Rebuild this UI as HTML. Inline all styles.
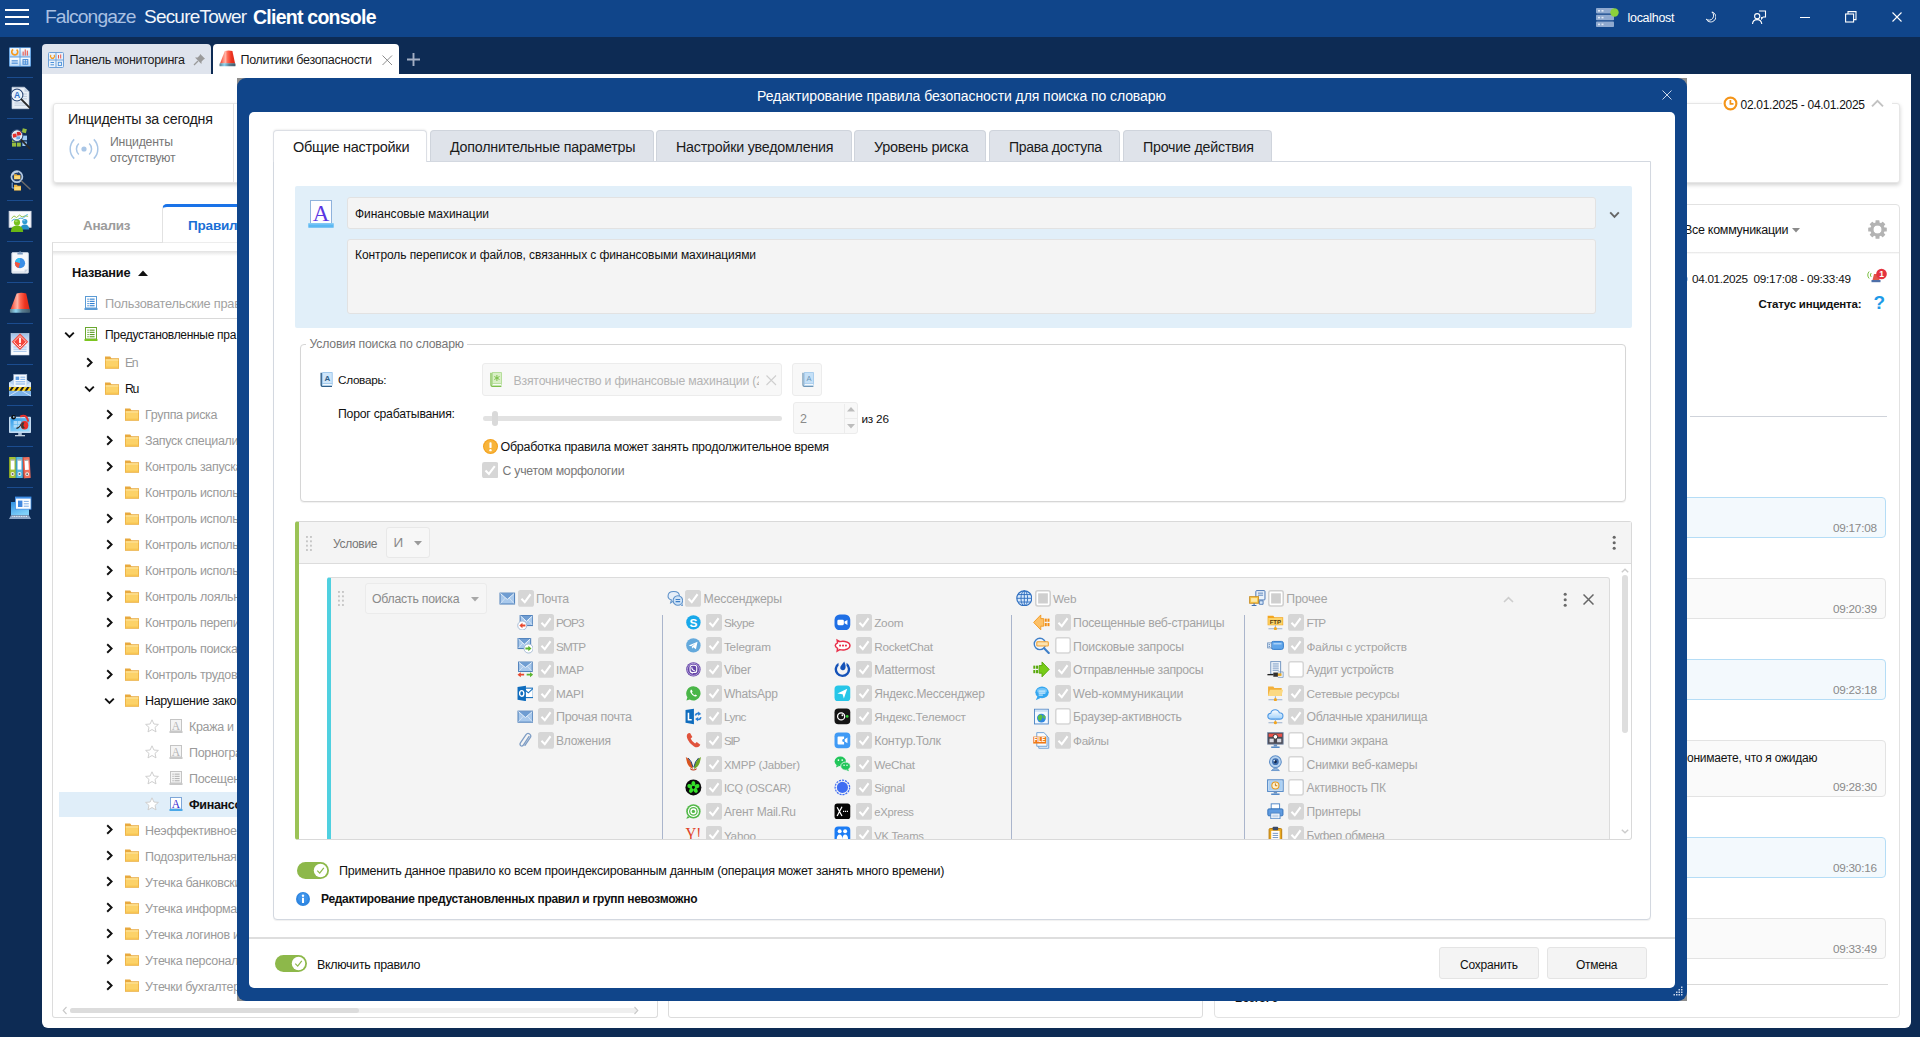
<!DOCTYPE html>
<html lang="ru"><head><meta charset="utf-8"><title>Falcongaze SecureTower Client console</title><style>
html,body{margin:0;padding:0;}
body{width:1920px;height:1037px;position:relative;overflow:hidden;background:#0d2b54;font-family:'Liberation Sans', sans-serif;font-size:12px;}
.b{position:absolute;box-sizing:border-box;display:block;}
.t{position:absolute;white-space:pre;display:block;}
.layer{position:absolute;left:0;top:0;width:1920px;height:1037px;overflow:hidden;}
</style></head>
<body>
<div class="b " style="left:0px;top:0px;width:1920px;height:37px;background:#10458a;"></div>
<div class="b " style="left:5px;top:9px;width:24px;height:2px;background:#fff;"></div>
<div class="b " style="left:5px;top:16px;width:24px;height:2px;background:#fff;"></div>
<div class="b " style="left:5px;top:23px;width:24px;height:2px;background:#fff;"></div>
<span class="t" style="left:45px;top:4.50px;line-height:24px;font-size:19.25px;color:#a9c0e2;letter-spacing:-0.893px;">Falcongaze</span>
<span class="t" style="left:144px;top:4.50px;line-height:24px;font-size:19.0px;color:#f2f6fb;letter-spacing:-0.789px;">SecureTower</span>
<span class="t" style="left:253px;top:4.50px;line-height:24px;font-size:19.5px;color:#fff;font-weight:bold;letter-spacing:-0.752px;">Client console</span>
<svg class="b" style="left:1596px;top:7px;" width="24" height="21" viewBox="0 0 24 21"><rect x="0" y="1" width="18" height="5.4" rx="0.8" fill="#8fa9cf"/><rect x="0" y="7.8" width="18" height="5.4" rx="0.8" fill="#8fa9cf"/><rect x="0" y="14.6" width="18" height="5.4" rx="0.8" fill="#8fa9cf"/><rect x="2" y="3" width="2" height="1.6" fill="#dfe8f5"/><rect x="5.5" y="3" width="2" height="1.6" fill="#dfe8f5"/><rect x="2" y="9.8" width="2" height="1.6" fill="#dfe8f5"/><rect x="5.5" y="9.8" width="2" height="1.6" fill="#dfe8f5"/><rect x="2" y="16.6" width="2" height="1.6" fill="#dfe8f5"/><rect x="5.5" y="16.6" width="2" height="1.6" fill="#dfe8f5"/><circle cx="18.5" cy="5.5" r="4.2" fill="#8bd13a"/></svg>
<span class="t" style="left:1627.5px;top:9.50px;line-height:16px;font-size:12.5px;color:#fff;letter-spacing:-0.292px;">localhost</span>
<svg class="b" style="left:1705.3px;top:11px;" width="11.2" height="11.6" viewBox="0 0 14 14"><path d="M8.6 1 A6.3 6.3 0 1 1 1.6 10 A5.2 5.2 0 1 0 8.6 1 Z" fill="none" stroke="#fff" stroke-width="1.2" stroke-linejoin="round"/></svg>
<svg class="b" style="left:1751px;top:9px;" width="16" height="16" viewBox="0 0 16 16"><circle cx="6.2" cy="7.2" r="2.6" fill="none" stroke="#fff" stroke-width="1.1"/><path d="M1.5 15 Q1.8 10.6 6.2 10.6 Q10.2 10.6 10.8 15" fill="none" stroke="#fff" stroke-width="1.1"/><path d="M8 2 H14.5 V8 H12.2 L10.6 9.8 V8" fill="none" stroke="#fff" stroke-width="1.1"/></svg>
<div class="b " style="left:1800px;top:16.5px;width:10px;height:1.2px;background:#fff;"></div>
<svg class="b" style="left:1845px;top:11px;" width="12" height="12" viewBox="0 0 12 12"><rect x="0.6" y="3" width="8" height="8" fill="none" stroke="#fff" stroke-width="1.1"/><path d="M3 3 V0.6 H11 V8.6 H8.6" fill="none" stroke="#fff" stroke-width="1.1"/></svg>
<svg class="b" style="left:1892px;top:12px;" width="10" height="10" viewBox="0 0 10 10"><path d="M0.5 0.5 L9.5 9.5 M9.5 0.5 L0.5 9.5" stroke="#fff" stroke-width="1.1" fill="none"/></svg>
<svg class="b" style="left:8px;top:45px;" width="24" height="24" viewBox="0 0 24 24"><defs><linearGradient id="dg" x1="0" y1="0" x2="0" y2="1"><stop offset="0" stop-color="#ffffff"/><stop offset="1" stop-color="#bcd9f7"/></linearGradient></defs><rect x="1" y="2.2" width="22" height="19.6" rx="1.2" fill="#5f9fe0"/><rect x="1.9" y="3.1" width="9.6" height="8.4" fill="url(#dg)"/><rect x="12.5" y="3.1" width="9.6" height="8.4" fill="url(#dg)"/><rect x="1.9" y="12.5" width="9.6" height="8.4" fill="url(#dg)"/><rect x="12.5" y="12.5" width="9.6" height="8.4" fill="url(#dg)"/><path d="M8.6 4.6 A3 3 0 1 1 5.2 4.4" fill="none" stroke="#f59a1e" stroke-width="1.7"/><rect x="14.6" y="6.6" width="1.1" height="4" fill="#ee5a4c"/><rect x="16.7" y="4.4" width="1.1" height="6.2" fill="#ee5a4c"/><rect x="18.8" y="5.6" width="1.1" height="5" fill="#ee5a4c"/><rect x="3.6" y="15.3" width="6.2" height="1.1" fill="#3f86d6"/><rect x="3.6" y="17.6" width="6.2" height="1.1" fill="#3f86d6"/><rect x="15" y="14.6" width="4.8" height="4.6" fill="none" stroke="#3f86d6" stroke-width="1"/><path d="M15 16.9 h4.8 M17.4 14.6 v4.6" stroke="#3f86d6" stroke-width="0.8"/></svg>
<div class="b " style="left:7px;top:77px;width:26px;height:1px;background:#1b4c8f;"></div>
<svg class="b" style="left:8px;top:86px;" width="24" height="24" viewBox="0 0 24 24"><path d="M4 1.2 h12.5 l4.5 4.5 v17 H4 Z" fill="#e9eff7" stroke="#c3cfdf" stroke-width="0.7"/><path d="M16.5 1.2 v4.5 h4.5 z" fill="#c6d3e4"/><path d="M6.5 17 h11.5 M6.5 19.2 h11.5 M14 8 h5 M15 10.4 h4 M15 12.8 h4" stroke="#b7c6d9" stroke-width="0.9"/><circle cx="9" cy="9" r="5.8" fill="#e4effb" stroke="#35507c" stroke-width="1.3"/><circle cx="9" cy="9" r="4.8" fill="none" stroke="#fff" stroke-width="0.8"/><text x="9" y="12.2" text-anchor="middle" font-size="8.6" font-weight="bold" font-family="Liberation Sans,sans-serif" fill="#2f6fc8">A</text><path d="M13.4 13.4 L21.6 21.6" stroke="#2a2a2a" stroke-width="1.9" stroke-linecap="round"/></svg>
<div class="b " style="left:7px;top:118px;width:26px;height:1px;background:#1b4c8f;"></div>
<svg class="b" style="left:8px;top:127px;" width="24" height="24" viewBox="0 0 24 24"><rect x="14.2" y="1.6" width="4.2" height="4.2" fill="#96bd3f" transform="rotate(14 16 4)"/><rect x="13.4" y="8.6" width="5.6" height="4.6" fill="#9fcbf5"/><rect x="14.4" y="14.6" width="4.4" height="4.4" fill="#9fcbf5"/><rect x="4" y="15.6" width="4" height="4" fill="#96bd3f"/><rect x="8.8" y="15.6" width="4" height="4" fill="#96bd3f"/><rect x="4" y="11" width="4" height="4" fill="#96bd3f"/><circle cx="9" cy="8.6" r="5.8" fill="#dbe8f6" stroke="#35507c" stroke-width="1.3"/><rect x="4.6" y="6.8" width="4" height="3.6" fill="#e8322e" transform="rotate(-8 6.6 8.6)"/><rect x="9" y="4.8" width="4.2" height="3.6" fill="#d42a2a" transform="rotate(-8 11 6.6)"/><rect x="8.4" y="9.4" width="3.6" height="3" fill="#6aa6e6"/><circle cx="9" cy="8.6" r="4.8" fill="none" stroke="#fff" stroke-width="0.8" opacity="0.8"/><path d="M13.4 13 L21.6 21.4" stroke="#2a2a2a" stroke-width="1.9" stroke-linecap="round"/></svg>
<div class="b " style="left:7px;top:159px;width:26px;height:1px;background:#1b4c8f;"></div>
<svg class="b" style="left:8px;top:168px;" width="24" height="24" viewBox="0 0 24 24"><path d="M4.2 14.6 V20 H6.2" stroke="#8fb6e6" stroke-width="1" fill="none"/><path d="M6 16.8 h2.94 l0.7000000000000001 1.008 H13 V22.4 H6 Z" fill="#e9b142"/><rect x="6.3" y="18.816000000000003" width="6.4" height="3.36" fill="#fbd977"/><circle cx="8.9" cy="8.7" r="5.5" fill="#1f3d6c" stroke="#b4c9e2" stroke-width="1.7"/><path d="M4.6 7.4 A4.6 4.6 0 0 1 10 4.2" stroke="#dfeaf6" stroke-width="1.2" fill="none" opacity="0.8"/><path d="M6 6.2 h2.688 l0.6400000000000001 0.8999999999999999 H12.4 V11.2 H6 Z" fill="#e9b142"/><rect x="6.3" y="8.0" width="5.800000000000001" height="3.0" fill="#fbd977"/><path d="M13.4 13 L22 21" stroke="#6a6a6a" stroke-width="1.5" stroke-linecap="round"/></svg>
<div class="b " style="left:7px;top:200px;width:26px;height:1px;background:#1b4c8f;"></div>
<svg class="b" style="left:8px;top:209px;" width="24" height="24" viewBox="0 0 24 24"><rect x="1.2" y="2.4" width="21.8" height="15.8" fill="#fbfcfe" stroke="#d7dde8" stroke-width="1"/><path d="M3.5 9.5 l2.4 -2.6 l2.6 1.6 l3 -2.4 l2.6 1.8 l3 -1 l3 0.4" stroke="#8fbe3a" stroke-width="0.9" fill="none"/><path d="M3.5 12 l2.6 -1.8 l3 0.6 l3 -1.6 l3 0.2 l3 -3.2 l1.6 -0.8" stroke="#3fa9dc" stroke-width="0.9" fill="none"/><circle cx="16.8" cy="12.6" r="2.6" fill="#2f9cd2"/><path d="M12.4 20.6 q0.2 -5 4.4 -5 q4.2 0 4.4 5 Z" fill="#2590c8"/><circle cx="9" cy="13.4" r="3.1" fill="#78c322"/><path d="M2.8 23 q0.2 -6.4 6.2 -6.4 q6 0 6.2 6.4 Z" fill="#6ab814"/><ellipse cx="8.2" cy="12.2" rx="1.5" ry="1" fill="#b5e27a" opacity="0.7"/><ellipse cx="16.2" cy="11.6" rx="1.2" ry="0.8" fill="#8fd0f2" opacity="0.7"/></svg>
<div class="b " style="left:7px;top:241px;width:26px;height:1px;background:#1b4c8f;"></div>
<svg class="b" style="left:8px;top:250px;" width="24" height="24" viewBox="0 0 24 24"><rect x="3.8" y="2.6" width="16.6" height="20.6" rx="0.8" fill="#f6f8fb" stroke="#c3cedd" stroke-width="0.9"/><rect x="4.6" y="21.2" width="15" height="1.4" fill="#dfe6ef"/><path d="M9.4 4.4 V2.4 H11 Q12.1 0.2 13.2 2.4 H14.8 V4.4 Z" fill="#7f9cc0"/><circle cx="12" cy="13.2" r="5.1" fill="#3a8ee6"/><path d="M12 13.2 L12 8.1 A5.1 5.1 0 0 0 7.1 11.8 Z" fill="#33c0f2"/><path d="M12 13.2 L7.1 11.8 A5.1 5.1 0 0 0 10.6 18.1 Z" fill="#f4553c"/><path d="M16.6 23 l3.6 -3.6 h-3.6 z" fill="#c9d4e3"/></svg>
<div class="b " style="left:7px;top:282px;width:26px;height:1px;background:#1b4c8f;"></div>
<svg class="b" style="left:8px;top:291px;" width="24" height="24" viewBox="0 0 24 24"><defs><linearGradient id="sg" x1="0" x2="1"><stop offset="0" stop-color="#ee3a26"/><stop offset="0.22" stop-color="#ff8a78"/><stop offset="0.36" stop-color="#ffb3a6"/><stop offset="0.5" stop-color="#ff6a55"/><stop offset="0.75" stop-color="#ee3420"/><stop offset="1" stop-color="#d92a18"/></linearGradient><linearGradient id="sb" x1="0" x2="1"><stop offset="0" stop-color="#5c7d8c"/><stop offset="0.3" stop-color="#8fd6f2"/><stop offset="0.6" stop-color="#5a7f93"/><stop offset="1" stop-color="#3f5a6c"/></linearGradient></defs><path d="M8.6 2.4 Q13.4 1.2 18.2 2.4 L21.6 18.2 H2.6 Z" fill="url(#sg)"/><rect x="1.9" y="18" width="20.2" height="3.8" rx="0.8" fill="url(#sb)"/></svg>
<div class="b " style="left:7px;top:323px;width:26px;height:1px;background:#1b4c8f;"></div>
<svg class="b" style="left:8px;top:332px;" width="24" height="24" viewBox="0 0 24 24"><defs><linearGradient id="ad" x1="0" y1="0" x2="0" y2="1"><stop offset="0" stop-color="#9ebfe6"/><stop offset="0.55" stop-color="#e4eefa"/><stop offset="1" stop-color="#ffffff"/></linearGradient></defs><rect x="3" y="1.4" width="18" height="21.6" fill="url(#ad)" stroke="#c9d8ea" stroke-width="0.6"/><path d="M5.4 15 h13.2 M5.4 17.2 h13.2 M5.4 19.4 h13.2" stroke="#9cc0e8" stroke-width="0.9"/><path d="M12 1.6 L20.2 9.8 L12 18 L3.8 9.8 Z" fill="#f4473c"/><path d="M12 3.6 L18.2 9.8 L12 16 L5.8 9.8 Z" fill="none" stroke="#ffd9d4" stroke-width="0.9"/><rect x="11.1" y="5.6" width="1.8" height="5.4" rx="0.5" fill="#fff"/><rect x="11.1" y="12" width="1.8" height="1.9" rx="0.5" fill="#fff"/></svg>
<div class="b " style="left:7px;top:364px;width:26px;height:1px;background:#1b4c8f;"></div>
<svg class="b" style="left:8px;top:373px;" width="24" height="24" viewBox="0 0 24 24"><path d="M1 9.6 L12 2.6 L23 9.6 V23 H1 Z" fill="#b9d4f2"/><rect x="5.8" y="1.6" width="13" height="13" fill="#f7fafd" stroke="#bcd0e8" stroke-width="0.6"/><rect x="7.6" y="3.6" width="3.6" height="3.4" fill="#5b9be0"/><path d="M12.4 4.2 h4.8 M12.4 6.4 h4.8 M7.6 8.8 h9.6 M7.6 11 h9.6" stroke="#6ea6e6" stroke-width="0.9"/><path d="M1 9.6 L9 14 H15 L23 9.6 V23 H1 Z" fill="#d6e7f9"/><rect x="1" y="17.8" width="22" height="5.2" fill="#7db3ea"/><path d="M1 23 L10 17.8 M23 23 L14 17.8" stroke="#d6e8fa" stroke-width="0.9"/><rect x="1" y="14" width="22" height="3.8" fill="#f9cf1c"/><path d="M1 17.8 l2.6 -3.8 h2.4 l-2.6 3.8 z M6.2 17.8 l2.6 -3.8 h2.4 l-2.6 3.8 z M11.4 17.8 l2.6 -3.8 h2.4 l-2.6 3.8 z M16.6 17.8 l2.6 -3.8 h2.4 l-2.6 3.8 z M21.8 17.8 l1.2 -1.8 v1.8 z" fill="#1a1a1a"/></svg>
<div class="b " style="left:7px;top:405px;width:26px;height:1px;background:#1b4c8f;"></div>
<svg class="b" style="left:8px;top:414px;" width="24" height="24" viewBox="0 0 24 24"><defs><linearGradient id="mg" x1="0" y1="0" x2="0.6" y2="1"><stop offset="0" stop-color="#2f98e6"/><stop offset="1" stop-color="#8fd6fb"/></linearGradient></defs><rect x="1" y="2.8" width="22" height="16.2" rx="0.8" fill="#c3daf0"/><rect x="2.4" y="4.2" width="19.2" height="13.2" fill="url(#mg)"/><rect x="5.6" y="7" width="3.4" height="3" fill="#bfe4fb" opacity="0.8"/><rect x="9.6" y="7" width="3.4" height="3" fill="#bfe4fb" opacity="0.8"/><rect x="5.6" y="10.6" width="3.4" height="3" fill="#bfe4fb" opacity="0.8"/><rect x="9.6" y="10.6" width="3.4" height="3" fill="#bfe4fb" opacity="0.8"/><rect x="10.2" y="19" width="3.6" height="2.2" fill="#a9bdd4"/><rect x="7" y="21" width="10" height="1.3" fill="#c3d0df"/><path d="M12.2 2.6 Q18.6 -0.8 20.2 7.6" fill="none" stroke="#ea2f2a" stroke-width="1.9"/><path d="M13.6 9.2 Q11.6 13.8 8.4 14.4" fill="none" stroke="#2a2a2a" stroke-width="1.1"/><ellipse cx="16.6" cy="11.2" rx="3.7" ry="4.3" fill="#ea2f2a"/><ellipse cx="15.2" cy="11.4" rx="2" ry="3.2" fill="#3a3a3a"/><ellipse cx="17.4" cy="11.2" rx="1.9" ry="2.7" fill="#ea2f2a"/><circle cx="5.5" cy="3.2" r="2.3" fill="#0c0c0c"/><circle cx="5.8" cy="2.9" r="0.9" fill="#8fc4f0"/></svg>
<div class="b " style="left:7px;top:446px;width:26px;height:1px;background:#1b4c8f;"></div>
<svg class="b" style="left:8px;top:455px;" width="24" height="24" viewBox="0 0 24 24"><g transform="rotate(0 7.9 23)"><rect x="1" y="2" width="6.9" height="21" rx="0.5" fill="#a3c035"/><rect x="1" y="2" width="1" height="21" fill="#8aa525"/><rect x="2.7" y="4.6" width="3.8" height="10" fill="#fff"/><rect x="2.7" y="4.6" width="3.8" height="0.9" fill="#8a8a8a"/><circle cx="4.6" cy="19" r="1.9" fill="#f4f4f4"/><circle cx="4.6" cy="19" r="1" fill="#6a6a6a"/></g><g transform="rotate(0 14.8 23)"><rect x="7.9" y="2" width="6.9" height="21" rx="0.5" fill="#55b6e0"/><rect x="7.9" y="2" width="1" height="21" fill="#3a9cc8"/><rect x="9.6" y="4.6" width="3.8" height="10" fill="#fff"/><rect x="9.6" y="4.6" width="3.8" height="0.9" fill="#8a8a8a"/><circle cx="11.5" cy="19" r="1.9" fill="#f4f4f4"/><circle cx="11.5" cy="19" r="1" fill="#6a6a6a"/></g><g transform="rotate(-3 22.700000000000003 23)"><rect x="15.8" y="2" width="6.9" height="21" rx="0.5" fill="#f0705c"/><rect x="15.8" y="2" width="1" height="21" fill="#d8503c"/><rect x="17.5" y="4.6" width="3.8" height="10" fill="#fff"/><rect x="17.5" y="4.6" width="3.8" height="0.9" fill="#8a8a8a"/><circle cx="19.400000000000002" cy="19" r="1.9" fill="#f4f4f4"/><circle cx="19.400000000000002" cy="19" r="1" fill="#6a6a6a"/></g></svg>
<div class="b " style="left:7px;top:487px;width:26px;height:1px;background:#1b4c8f;"></div>
<svg class="b" style="left:8px;top:496px;" width="24" height="24" viewBox="0 0 24 24"><defs><linearGradient id="lg" x1="0" y1="0" x2="0.5" y2="1"><stop offset="0" stop-color="#2f90e2"/><stop offset="1" stop-color="#7fd0fa"/></linearGradient></defs><rect x="3" y="6" width="18" height="13.2" fill="url(#lg)"/><path d="M3 19.2 L1 23 H23 L21 19.2 Z" fill="#8ea6c6"/><path d="M4.4 20.4 h15.2" stroke="#eef3f9" stroke-width="1" stroke-dasharray="1 0.7"/><rect x="7.4" y="1" width="15.6" height="12.2" fill="#fbfdff" stroke="#3f8ee6" stroke-width="0.8"/><rect x="7.4" y="1" width="15.6" height="1.6" fill="#3f8ee6"/><rect x="10" y="4.6" width="4.4" height="6.4" fill="#3f86de"/><path d="M15.8 5.4 h5 M15.8 7.8 h5 M15.8 10.2 h5" stroke="#6fa4e2" stroke-width="0.9"/></svg>
<div class="b " style="left:42px;top:44px;width:169px;height:30px;background:#dfe4ed;border-radius:4px 4px 0 0;"></div>
<div class="b " style="left:213px;top:44px;width:185.7px;height:30px;background:#fff;border-radius:4px 4px 0 0;"></div>
<svg class="b" style="left:48px;top:52px;" width="16" height="16" viewBox="0 0 16 16"><rect x="0.5" y="0.5" width="15" height="15" rx="1" fill="#eaf2fb" stroke="#6fa1d8" stroke-width="1"/><path d="M8 0.5 V15.5 M0.5 8 H15.5" stroke="#6fa1d8" stroke-width="1"/><path d="M6 3 A2 2 0 1 1 3 3" fill="none" stroke="#f39a1e" stroke-width="1.2"/><path d="M10.5 3 v3.5 M12.7 2.5 v4" stroke="#e8574a" stroke-width="1"/><path d="M2.5 10.5 h3.5 M2.5 12.8 h3.5" stroke="#4a90d9" stroke-width="1"/><rect x="10.3" y="10.3" width="3.2" height="3.2" fill="none" stroke="#4a90d9" stroke-width="0.9"/></svg>
<span class="t" style="left:69.5px;top:52.00px;line-height:16px;font-size:12.5px;color:#1a1a1a;letter-spacing:-0.306px;">Панель мониторинга</span>
<svg class="b" style="left:193px;top:53px;" width="13" height="13" viewBox="0 0 13 13"><path d="M7.2 1 L12 5.8 L10.6 6.4 L8.6 8.4 L8.4 11 L2 4.6 L4.6 4.4 L6.6 2.4 Z" fill="#9a9a9a"/><path d="M5 8 L1 12" stroke="#9a9a9a" stroke-width="1.2"/></svg>
<svg class="b" style="left:217.6px;top:49.4px;" width="19" height="19" viewBox="0 0 24 24"><defs><linearGradient id="sg" x1="0" x2="1"><stop offset="0" stop-color="#ee3a26"/><stop offset="0.22" stop-color="#ff8a78"/><stop offset="0.36" stop-color="#ffb3a6"/><stop offset="0.5" stop-color="#ff6a55"/><stop offset="0.75" stop-color="#ee3420"/><stop offset="1" stop-color="#d92a18"/></linearGradient><linearGradient id="sb" x1="0" x2="1"><stop offset="0" stop-color="#5c7d8c"/><stop offset="0.3" stop-color="#8fd6f2"/><stop offset="0.6" stop-color="#5a7f93"/><stop offset="1" stop-color="#3f5a6c"/></linearGradient></defs><path d="M8.6 2.4 Q13.4 1.2 18.2 2.4 L21.6 18.2 H2.6 Z" fill="url(#sg)"/><rect x="1.9" y="18" width="20.2" height="3.8" rx="0.8" fill="url(#sb)"/></svg>
<span class="t" style="left:240.5px;top:52.00px;line-height:16px;font-size:12.5px;color:#1a1a1a;letter-spacing:-0.305px;">Политики безопасности</span>
<svg class="b" style="left:382px;top:54.5px;" width="10.5" height="10.5" viewBox="0 0 10.5 10.5"><path d="M0.5 0.5 L10.0 10.0 M10.0 0.5 L0.5 10.0" stroke="#8c8c8c" stroke-width="1.0" fill="none"/></svg>
<svg class="b" style="left:406.5px;top:52.5px;" width="13" height="13" viewBox="0 0 13 13"><path d="M6.5 0 V13 M0 6.5 H13" stroke="#a3afc4" stroke-width="1.9"/></svg>
<div class="b " style="left:42px;top:73.5px;width:1869px;height:954.5px;background:#fff;border-radius:0 0 6px 6px;"></div>
<div class="b " style="left:53px;top:103px;width:1847px;height:79.7px;background:#fff;border:1px solid #e6e6e6;border-radius:3px;box-shadow:0 2px 4px rgba(0,0,0,0.18);"></div>
<div class="b " style="left:233px;top:103px;width:1px;height:79px;background:#e3e3e3;"></div>
<span class="t" style="left:68px;top:109.00px;line-height:20px;font-size:14.25px;color:#1a1a1a;letter-spacing:-0.207px;">Инциденты за сегодня</span>
<svg class="b" style="left:68px;top:136px;" width="32" height="26" viewBox="0 0 32 26"><circle cx="16" cy="13" r="2.6" fill="#a9c6e6"/><path d="M10.8 7.5 A7.6 7.6 0 0 0 10.8 18.5 M21.2 7.5 A7.6 7.6 0 0 1 21.2 18.5" fill="none" stroke="#a9c6e6" stroke-width="1.5"/><path d="M6.2 3.4 A13.5 13.5 0 0 0 6.2 22.6 M25.8 3.4 A13.5 13.5 0 0 1 25.8 22.6" fill="none" stroke="#a9c6e6" stroke-width="1.5"/></svg>
<span class="t" style="left:110px;top:134.00px;line-height:16px;font-size:12.25px;color:#777;letter-spacing:-0.197px;">Инциденты</span>
<span class="t" style="left:110px;top:150.00px;line-height:16px;font-size:12.25px;color:#777;letter-spacing:-0.287px;">отсутствуют</span>
<div class="b " style="left:1722px;top:98px;width:170px;height:12px;background:#fff;"></div>
<svg class="b" style="left:1723px;top:96px;" width="15" height="15" viewBox="0 0 15 15"><circle cx="7.5" cy="7.5" r="5.9" fill="#fff" stroke="#f4951a" stroke-width="2.1"/><path d="M7.4 3.9 V7.9 H10.5" fill="none" stroke="#f4951a" stroke-width="1.7"/></svg>
<span class="t" style="left:1740.5px;top:97.00px;line-height:16px;font-size:12px;color:#111;letter-spacing:-0.286px;">02.01.2025 - 04.01.2025</span>
<svg class="b" style="left:1871px;top:99px;" width="13" height="8.5" viewBox="0 0 13 8.5"><path d="M1 7.4 L6.5 1.8 L12 7.4" fill="none" stroke="#c2c2c2" stroke-width="1.9"/></svg>
<span class="t" style="left:83px;top:216.00px;line-height:20px;font-size:13.5px;color:#9c9c9c;font-weight:bold;letter-spacing:-0.302px;">Анализ</span>
<div class="b " style="left:162px;top:203.7px;width:200px;height:39.3px;background:#fff;border:1px solid #e2e2e2;border-radius:5px 5px 0 0;border-bottom:none;border-top:3.4px solid #1a73e8;"></div>
<span class="t" style="left:188px;top:216.00px;line-height:20px;font-size:13.5px;color:#1a6fd6;font-weight:bold;letter-spacing:-0.191px;">Правила</span>
<div class="b " style="left:52px;top:242px;width:606px;height:776px;background:#fff;border:1px solid #dcdcdc;border-radius:0 0 3px 3px;border-top:1px solid #e2e2e2;"></div>
<div class="b " style="left:163px;top:242px;width:198px;height:1px;background:#ededed;"></div>
<div class="b " style="left:53px;top:251px;width:604px;height:5px;background:linear-gradient(#e2e2e2,#fff);"></div>
<span class="t" style="left:72px;top:263.00px;line-height:20px;font-size:12.75px;color:#111;font-weight:bold;letter-spacing:-0.242px;">Название</span>
<svg class="b" style="left:137.7px;top:270.3px;" width="10" height="7" viewBox="0 0 10 7"><path d="M0 6 L5 0.5 L10 6 Z" fill="#111"/></svg>
<span class="t" style="left:145px;top:-58.00px;line-height:16px;font-size:12.5px;color:#000;letter-spacing:-0.316px;">Группа риска</span>
<svg class="b" style="left:84px;top:296px;" width="14" height="15" viewBox="0 0 14 15"><rect x="1.5" y="0.5" width="11" height="11.5" fill="#fff" stroke="#5b9bd5" stroke-width="1"/><rect x="0.5" y="12" width="13" height="2" fill="#5b9bd5"/><rect x="3.4" y="2.6" width="1.3" height="1.1" fill="#2f7fd0"/><rect x="5.6" y="2.6" width="5" height="1.1" fill="#2f7fd0"/><rect x="3.4" y="4.800000000000001" width="1.3" height="1.1" fill="#2f7fd0"/><rect x="5.6" y="4.800000000000001" width="5" height="1.1" fill="#2f7fd0"/><rect x="3.4" y="7.0" width="1.3" height="1.1" fill="#2f7fd0"/><rect x="5.6" y="7.0" width="5" height="1.1" fill="#2f7fd0"/><rect x="3.4" y="9.200000000000001" width="1.3" height="1.1" fill="#2f7fd0"/><rect x="5.6" y="9.200000000000001" width="5" height="1.1" fill="#2f7fd0"/></svg>
<span class="t" style="left:105px;top:296.30px;line-height:16px;font-size:12.75px;color:#a2a2a2;letter-spacing:-0.216px;">Пользовательские правила</span>
<div class="b " style="left:59px;top:318px;width:590px;height:1px;background:#d9d9d9;"></div>
<svg class="b" style="left:63.5px;top:330px;" width="11" height="11" viewBox="0 0 11 11"><path d="M1.2 2.6 L5.5 6.9 L9.8 2.6" fill="none" stroke="#111" stroke-width="1.9"/></svg>
<svg class="b" style="left:84px;top:327px;" width="14" height="15" viewBox="0 0 14 15"><rect x="1.5" y="0.5" width="11" height="11.5" fill="#fff" stroke="#6aa82f" stroke-width="1"/><rect x="0.5" y="12" width="13" height="2" fill="#7cc520"/><rect x="3.4" y="2.6" width="1.3" height="1.1" fill="#5a9a25"/><rect x="5.6" y="2.6" width="5" height="1.1" fill="#5a9a25"/><rect x="3.4" y="4.800000000000001" width="1.3" height="1.1" fill="#5a9a25"/><rect x="5.6" y="4.800000000000001" width="5" height="1.1" fill="#5a9a25"/><rect x="3.4" y="7.0" width="1.3" height="1.1" fill="#5a9a25"/><rect x="5.6" y="7.0" width="5" height="1.1" fill="#5a9a25"/><rect x="3.4" y="9.200000000000001" width="1.3" height="1.1" fill="#5a9a25"/><rect x="5.6" y="9.200000000000001" width="5" height="1.1" fill="#5a9a25"/></svg>
<span class="t" style="left:105px;top:327.30px;line-height:16px;font-size:12.0px;color:#111;letter-spacing:-0.306px;">Предустановленные пра</span>
<svg class="b" style="left:85px;top:356.5px;" width="11" height="11" viewBox="0 0 11 11"><path d="M2.2 1.2 L6.6 5.5 L2.2 9.8" fill="none" stroke="#111" stroke-width="1.9"/></svg>
<svg class="b" style="left:104px;top:353.5px;" width="16" height="16" viewBox="0 0 16 16"><path d="M1 2.6 h5.2 l1.2 1.7 H15 V14.8 H1 Z" fill="#e8a93e"/><rect x="1.7" y="5.3" width="12.6" height="8.8" fill="#fcd268"/><rect x="1.7" y="5.3" width="12.6" height="1.3" fill="#fee39a"/><rect x="1.7" y="12.6" width="12.6" height="1.5" fill="#f8c552"/></svg>
<span class="t" style="left:125px;top:355.00px;line-height:16px;font-size:12.25px;color:#9a9a9a;letter-spacing:-1.300px;">En</span>
<svg class="b" style="left:83.5px;top:383.5px;" width="11" height="11" viewBox="0 0 11 11"><path d="M1.2 2.6 L5.5 6.9 L9.8 2.6" fill="none" stroke="#111" stroke-width="1.9"/></svg>
<svg class="b" style="left:104px;top:379.5px;" width="16" height="16" viewBox="0 0 16 16"><path d="M1 2.6 h5.2 l1.2 1.7 H15 V14.8 H1 Z" fill="#e8a93e"/><rect x="1.7" y="5.3" width="12.6" height="8.8" fill="#fcd268"/><rect x="1.7" y="5.3" width="12.6" height="1.3" fill="#fee39a"/><rect x="1.7" y="12.6" width="12.6" height="1.5" fill="#f8c552"/></svg>
<span class="t" style="left:125px;top:381.00px;line-height:16px;font-size:12.25px;color:#111;letter-spacing:-1.300px;">Ru</span>
<svg class="b" style="left:105px;top:408.5px;" width="11" height="11" viewBox="0 0 11 11"><path d="M2.2 1.2 L6.6 5.5 L2.2 9.8" fill="none" stroke="#111" stroke-width="1.9"/></svg>
<svg class="b" style="left:124px;top:405.5px;" width="16" height="16" viewBox="0 0 16 16"><path d="M1 2.6 h5.2 l1.2 1.7 H15 V14.8 H1 Z" fill="#e8a93e"/><rect x="1.7" y="5.3" width="12.6" height="8.8" fill="#fcd268"/><rect x="1.7" y="5.3" width="12.6" height="1.3" fill="#fee39a"/><rect x="1.7" y="12.6" width="12.6" height="1.5" fill="#f8c552"/></svg>
<span class="t" style="left:145px;top:407.00px;line-height:16px;font-size:12.5px;color:#9a9a9a;letter-spacing:-0.316px;">Группа риска</span>
<svg class="b" style="left:105px;top:434.5px;" width="11" height="11" viewBox="0 0 11 11"><path d="M2.2 1.2 L6.6 5.5 L2.2 9.8" fill="none" stroke="#111" stroke-width="1.9"/></svg>
<svg class="b" style="left:124px;top:431.5px;" width="16" height="16" viewBox="0 0 16 16"><path d="M1 2.6 h5.2 l1.2 1.7 H15 V14.8 H1 Z" fill="#e8a93e"/><rect x="1.7" y="5.3" width="12.6" height="8.8" fill="#fcd268"/><rect x="1.7" y="5.3" width="12.6" height="1.3" fill="#fee39a"/><rect x="1.7" y="12.6" width="12.6" height="1.5" fill="#f8c552"/></svg>
<span class="t" style="left:145px;top:433.00px;line-height:16px;font-size:12.5px;color:#9a9a9a;letter-spacing:-0.316px;">Запуск специализированного ПО</span>
<svg class="b" style="left:105px;top:460.5px;" width="11" height="11" viewBox="0 0 11 11"><path d="M2.2 1.2 L6.6 5.5 L2.2 9.8" fill="none" stroke="#111" stroke-width="1.9"/></svg>
<svg class="b" style="left:124px;top:457.5px;" width="16" height="16" viewBox="0 0 16 16"><path d="M1 2.6 h5.2 l1.2 1.7 H15 V14.8 H1 Z" fill="#e8a93e"/><rect x="1.7" y="5.3" width="12.6" height="8.8" fill="#fcd268"/><rect x="1.7" y="5.3" width="12.6" height="1.3" fill="#fee39a"/><rect x="1.7" y="12.6" width="12.6" height="1.5" fill="#f8c552"/></svg>
<span class="t" style="left:145px;top:459.00px;line-height:16px;font-size:12.5px;color:#9a9a9a;letter-spacing:-0.316px;">Контроль запуска приложений</span>
<svg class="b" style="left:105px;top:486.5px;" width="11" height="11" viewBox="0 0 11 11"><path d="M2.2 1.2 L6.6 5.5 L2.2 9.8" fill="none" stroke="#111" stroke-width="1.9"/></svg>
<svg class="b" style="left:124px;top:483.5px;" width="16" height="16" viewBox="0 0 16 16"><path d="M1 2.6 h5.2 l1.2 1.7 H15 V14.8 H1 Z" fill="#e8a93e"/><rect x="1.7" y="5.3" width="12.6" height="8.8" fill="#fcd268"/><rect x="1.7" y="5.3" width="12.6" height="1.3" fill="#fee39a"/><rect x="1.7" y="12.6" width="12.6" height="1.5" fill="#f8c552"/></svg>
<span class="t" style="left:145px;top:485.00px;line-height:16px;font-size:12.5px;color:#9a9a9a;letter-spacing:-0.316px;">Контроль использования</span>
<svg class="b" style="left:105px;top:512.5px;" width="11" height="11" viewBox="0 0 11 11"><path d="M2.2 1.2 L6.6 5.5 L2.2 9.8" fill="none" stroke="#111" stroke-width="1.9"/></svg>
<svg class="b" style="left:124px;top:509.5px;" width="16" height="16" viewBox="0 0 16 16"><path d="M1 2.6 h5.2 l1.2 1.7 H15 V14.8 H1 Z" fill="#e8a93e"/><rect x="1.7" y="5.3" width="12.6" height="8.8" fill="#fcd268"/><rect x="1.7" y="5.3" width="12.6" height="1.3" fill="#fee39a"/><rect x="1.7" y="12.6" width="12.6" height="1.5" fill="#f8c552"/></svg>
<span class="t" style="left:145px;top:511.00px;line-height:16px;font-size:12.5px;color:#9a9a9a;letter-spacing:-0.316px;">Контроль использования</span>
<svg class="b" style="left:105px;top:538.5px;" width="11" height="11" viewBox="0 0 11 11"><path d="M2.2 1.2 L6.6 5.5 L2.2 9.8" fill="none" stroke="#111" stroke-width="1.9"/></svg>
<svg class="b" style="left:124px;top:535.5px;" width="16" height="16" viewBox="0 0 16 16"><path d="M1 2.6 h5.2 l1.2 1.7 H15 V14.8 H1 Z" fill="#e8a93e"/><rect x="1.7" y="5.3" width="12.6" height="8.8" fill="#fcd268"/><rect x="1.7" y="5.3" width="12.6" height="1.3" fill="#fee39a"/><rect x="1.7" y="12.6" width="12.6" height="1.5" fill="#f8c552"/></svg>
<span class="t" style="left:145px;top:537.00px;line-height:16px;font-size:12.5px;color:#9a9a9a;letter-spacing:-0.316px;">Контроль использования</span>
<svg class="b" style="left:105px;top:564.5px;" width="11" height="11" viewBox="0 0 11 11"><path d="M2.2 1.2 L6.6 5.5 L2.2 9.8" fill="none" stroke="#111" stroke-width="1.9"/></svg>
<svg class="b" style="left:124px;top:561.5px;" width="16" height="16" viewBox="0 0 16 16"><path d="M1 2.6 h5.2 l1.2 1.7 H15 V14.8 H1 Z" fill="#e8a93e"/><rect x="1.7" y="5.3" width="12.6" height="8.8" fill="#fcd268"/><rect x="1.7" y="5.3" width="12.6" height="1.3" fill="#fee39a"/><rect x="1.7" y="12.6" width="12.6" height="1.5" fill="#f8c552"/></svg>
<span class="t" style="left:145px;top:563.00px;line-height:16px;font-size:12.5px;color:#9a9a9a;letter-spacing:-0.316px;">Контроль использования</span>
<svg class="b" style="left:105px;top:590.5px;" width="11" height="11" viewBox="0 0 11 11"><path d="M2.2 1.2 L6.6 5.5 L2.2 9.8" fill="none" stroke="#111" stroke-width="1.9"/></svg>
<svg class="b" style="left:124px;top:587.5px;" width="16" height="16" viewBox="0 0 16 16"><path d="M1 2.6 h5.2 l1.2 1.7 H15 V14.8 H1 Z" fill="#e8a93e"/><rect x="1.7" y="5.3" width="12.6" height="8.8" fill="#fcd268"/><rect x="1.7" y="5.3" width="12.6" height="1.3" fill="#fee39a"/><rect x="1.7" y="12.6" width="12.6" height="1.5" fill="#f8c552"/></svg>
<span class="t" style="left:145px;top:589.00px;line-height:16px;font-size:12.5px;color:#9a9a9a;letter-spacing:-0.316px;">Контроль лояльности</span>
<svg class="b" style="left:105px;top:616.5px;" width="11" height="11" viewBox="0 0 11 11"><path d="M2.2 1.2 L6.6 5.5 L2.2 9.8" fill="none" stroke="#111" stroke-width="1.9"/></svg>
<svg class="b" style="left:124px;top:613.5px;" width="16" height="16" viewBox="0 0 16 16"><path d="M1 2.6 h5.2 l1.2 1.7 H15 V14.8 H1 Z" fill="#e8a93e"/><rect x="1.7" y="5.3" width="12.6" height="8.8" fill="#fcd268"/><rect x="1.7" y="5.3" width="12.6" height="1.3" fill="#fee39a"/><rect x="1.7" y="12.6" width="12.6" height="1.5" fill="#f8c552"/></svg>
<span class="t" style="left:145px;top:615.00px;line-height:16px;font-size:12.5px;color:#9a9a9a;letter-spacing:-0.316px;">Контроль переписки</span>
<svg class="b" style="left:105px;top:642.5px;" width="11" height="11" viewBox="0 0 11 11"><path d="M2.2 1.2 L6.6 5.5 L2.2 9.8" fill="none" stroke="#111" stroke-width="1.9"/></svg>
<svg class="b" style="left:124px;top:639.5px;" width="16" height="16" viewBox="0 0 16 16"><path d="M1 2.6 h5.2 l1.2 1.7 H15 V14.8 H1 Z" fill="#e8a93e"/><rect x="1.7" y="5.3" width="12.6" height="8.8" fill="#fcd268"/><rect x="1.7" y="5.3" width="12.6" height="1.3" fill="#fee39a"/><rect x="1.7" y="12.6" width="12.6" height="1.5" fill="#f8c552"/></svg>
<span class="t" style="left:145px;top:641.00px;line-height:16px;font-size:12.5px;color:#9a9a9a;letter-spacing:-0.316px;">Контроль поиска работы</span>
<svg class="b" style="left:105px;top:668.5px;" width="11" height="11" viewBox="0 0 11 11"><path d="M2.2 1.2 L6.6 5.5 L2.2 9.8" fill="none" stroke="#111" stroke-width="1.9"/></svg>
<svg class="b" style="left:124px;top:665.5px;" width="16" height="16" viewBox="0 0 16 16"><path d="M1 2.6 h5.2 l1.2 1.7 H15 V14.8 H1 Z" fill="#e8a93e"/><rect x="1.7" y="5.3" width="12.6" height="8.8" fill="#fcd268"/><rect x="1.7" y="5.3" width="12.6" height="1.3" fill="#fee39a"/><rect x="1.7" y="12.6" width="12.6" height="1.5" fill="#f8c552"/></svg>
<span class="t" style="left:145px;top:667.00px;line-height:16px;font-size:12.5px;color:#9a9a9a;letter-spacing:-0.316px;">Контроль трудовой дисциплины</span>
<svg class="b" style="left:103.5px;top:695.5px;" width="11" height="11" viewBox="0 0 11 11"><path d="M1.2 2.6 L5.5 6.9 L9.8 2.6" fill="none" stroke="#111" stroke-width="1.9"/></svg>
<svg class="b" style="left:124px;top:691.5px;" width="16" height="16" viewBox="0 0 16 16"><path d="M1 2.6 h5.2 l1.2 1.7 H15 V14.8 H1 Z" fill="#e8a93e"/><rect x="1.7" y="5.3" width="12.6" height="8.8" fill="#fcd268"/><rect x="1.7" y="5.3" width="12.6" height="1.3" fill="#fee39a"/><rect x="1.7" y="12.6" width="12.6" height="1.5" fill="#f8c552"/></svg>
<span class="t" style="left:145px;top:693.00px;line-height:16px;font-size:12.5px;color:#111;letter-spacing:-0.316px;">Нарушение законодательства</span>
<div class="b " style="left:59px;top:791.5px;width:590px;height:25.5px;background:#e0eef9;"></div>
<svg class="b" style="left:144.5px;top:718.5px;" width="14" height="14" viewBox="0 0 14 14"><path d="M7 0.8 L8.9 5 L13.4 5.4 L10 8.4 L11 12.9 L7 10.5 L3 12.9 L4 8.4 L0.6 5.4 L5.1 5 Z" fill="#fff" stroke="#cfcfcf" stroke-width="1" stroke-linejoin="round"/></svg>
<svg class="b" style="left:169px;top:718.5px;" width="14" height="15" viewBox="0 0 14 15"><rect x="1.5" y="0.5" width="11" height="11.5" fill="#f4f4f4" stroke="#c4c4c4" stroke-width="1"/><rect x="0.5" y="12" width="13" height="2" fill="#c8c8c8"/><text x="7" y="10.6" text-anchor="middle" font-family="Liberation Serif,serif" font-size="11.5" fill="#b5b5b5">A</text></svg>
<span class="t" style="left:189px;top:718.80px;line-height:16px;font-size:12.5px;color:#9a9a9a;letter-spacing:-0.316px;">Кража и</span>
<svg class="b" style="left:144.5px;top:744.5px;" width="14" height="14" viewBox="0 0 14 14"><path d="M7 0.8 L8.9 5 L13.4 5.4 L10 8.4 L11 12.9 L7 10.5 L3 12.9 L4 8.4 L0.6 5.4 L5.1 5 Z" fill="#fff" stroke="#cfcfcf" stroke-width="1" stroke-linejoin="round"/></svg>
<svg class="b" style="left:169px;top:744.5px;" width="14" height="15" viewBox="0 0 14 15"><rect x="1.5" y="0.5" width="11" height="11.5" fill="#f4f4f4" stroke="#c4c4c4" stroke-width="1"/><rect x="0.5" y="12" width="13" height="2" fill="#c8c8c8"/><text x="7" y="10.6" text-anchor="middle" font-family="Liberation Serif,serif" font-size="11.5" fill="#b5b5b5">A</text></svg>
<span class="t" style="left:189px;top:744.80px;line-height:16px;font-size:12.5px;color:#9a9a9a;letter-spacing:-0.316px;">Порнография</span>
<svg class="b" style="left:144.5px;top:770.5px;" width="14" height="14" viewBox="0 0 14 14"><path d="M7 0.8 L8.9 5 L13.4 5.4 L10 8.4 L11 12.9 L7 10.5 L3 12.9 L4 8.4 L0.6 5.4 L5.1 5 Z" fill="#fff" stroke="#cfcfcf" stroke-width="1" stroke-linejoin="round"/></svg>
<svg class="b" style="left:169px;top:770.5px;" width="14" height="15" viewBox="0 0 14 15"><rect x="1.5" y="0.5" width="11" height="11.5" fill="#f4f4f4" stroke="#c4c4c4" stroke-width="1"/><rect x="0.5" y="12" width="13" height="2" fill="#c8c8c8"/><rect x="3.4" y="2.6" width="1.3" height="1.1" fill="#b5b5b5"/><rect x="5.6" y="2.6" width="5" height="1.1" fill="#b5b5b5"/><rect x="3.4" y="4.800000000000001" width="1.3" height="1.1" fill="#b5b5b5"/><rect x="5.6" y="4.800000000000001" width="5" height="1.1" fill="#b5b5b5"/><rect x="3.4" y="7.0" width="1.3" height="1.1" fill="#b5b5b5"/><rect x="5.6" y="7.0" width="5" height="1.1" fill="#b5b5b5"/><rect x="3.4" y="9.200000000000001" width="1.3" height="1.1" fill="#b5b5b5"/><rect x="5.6" y="9.200000000000001" width="5" height="1.1" fill="#b5b5b5"/></svg>
<span class="t" style="left:189px;top:770.80px;line-height:16px;font-size:12.5px;color:#9a9a9a;letter-spacing:-0.316px;">Посещение</span>
<svg class="b" style="left:144.5px;top:796.5px;" width="14" height="14" viewBox="0 0 14 14"><path d="M7 0.8 L8.9 5 L13.4 5.4 L10 8.4 L11 12.9 L7 10.5 L3 12.9 L4 8.4 L0.6 5.4 L5.1 5 Z" fill="#fff" stroke="#cfcfcf" stroke-width="1" stroke-linejoin="round"/></svg>
<svg class="b" style="left:169px;top:796.5px;" width="14" height="15" viewBox="0 0 14 15"><rect x="1.5" y="0.5" width="11" height="11.5" fill="#fff" stroke="#7ea6d8" stroke-width="1"/><rect x="0.5" y="12" width="13" height="2" fill="#4aa8e8"/><text x="7" y="10.6" text-anchor="middle" font-family="Liberation Serif,serif" font-size="11.5" fill="#3a1fd0">A</text></svg>
<span class="t" style="left:189px;top:796.80px;line-height:16px;font-size:12.5px;color:#111;font-weight:bold;letter-spacing:-0.316px;">Финансовые махинации</span>
<svg class="b" style="left:105px;top:824.3px;" width="11" height="11" viewBox="0 0 11 11"><path d="M2.2 1.2 L6.6 5.5 L2.2 9.8" fill="none" stroke="#111" stroke-width="1.9"/></svg>
<svg class="b" style="left:124px;top:821.3px;" width="16" height="16" viewBox="0 0 16 16"><path d="M1 2.6 h5.2 l1.2 1.7 H15 V14.8 H1 Z" fill="#e8a93e"/><rect x="1.7" y="5.3" width="12.6" height="8.8" fill="#fcd268"/><rect x="1.7" y="5.3" width="12.6" height="1.3" fill="#fee39a"/><rect x="1.7" y="12.6" width="12.6" height="1.5" fill="#f8c552"/></svg>
<span class="t" style="left:145px;top:822.80px;line-height:16px;font-size:12.5px;color:#9a9a9a;letter-spacing:-0.316px;">Неэффективное использование</span>
<svg class="b" style="left:105px;top:850.3px;" width="11" height="11" viewBox="0 0 11 11"><path d="M2.2 1.2 L6.6 5.5 L2.2 9.8" fill="none" stroke="#111" stroke-width="1.9"/></svg>
<svg class="b" style="left:124px;top:847.3px;" width="16" height="16" viewBox="0 0 16 16"><path d="M1 2.6 h5.2 l1.2 1.7 H15 V14.8 H1 Z" fill="#e8a93e"/><rect x="1.7" y="5.3" width="12.6" height="8.8" fill="#fcd268"/><rect x="1.7" y="5.3" width="12.6" height="1.3" fill="#fee39a"/><rect x="1.7" y="12.6" width="12.6" height="1.5" fill="#f8c552"/></svg>
<span class="t" style="left:145px;top:848.80px;line-height:16px;font-size:12.5px;color:#9a9a9a;letter-spacing:-0.316px;">Подозрительная активность</span>
<svg class="b" style="left:105px;top:876.3px;" width="11" height="11" viewBox="0 0 11 11"><path d="M2.2 1.2 L6.6 5.5 L2.2 9.8" fill="none" stroke="#111" stroke-width="1.9"/></svg>
<svg class="b" style="left:124px;top:873.3px;" width="16" height="16" viewBox="0 0 16 16"><path d="M1 2.6 h5.2 l1.2 1.7 H15 V14.8 H1 Z" fill="#e8a93e"/><rect x="1.7" y="5.3" width="12.6" height="8.8" fill="#fcd268"/><rect x="1.7" y="5.3" width="12.6" height="1.3" fill="#fee39a"/><rect x="1.7" y="12.6" width="12.6" height="1.5" fill="#f8c552"/></svg>
<span class="t" style="left:145px;top:874.80px;line-height:16px;font-size:12.5px;color:#9a9a9a;letter-spacing:-0.316px;">Утечка банковских данных</span>
<svg class="b" style="left:105px;top:902.3px;" width="11" height="11" viewBox="0 0 11 11"><path d="M2.2 1.2 L6.6 5.5 L2.2 9.8" fill="none" stroke="#111" stroke-width="1.9"/></svg>
<svg class="b" style="left:124px;top:899.3px;" width="16" height="16" viewBox="0 0 16 16"><path d="M1 2.6 h5.2 l1.2 1.7 H15 V14.8 H1 Z" fill="#e8a93e"/><rect x="1.7" y="5.3" width="12.6" height="8.8" fill="#fcd268"/><rect x="1.7" y="5.3" width="12.6" height="1.3" fill="#fee39a"/><rect x="1.7" y="12.6" width="12.6" height="1.5" fill="#f8c552"/></svg>
<span class="t" style="left:145px;top:900.80px;line-height:16px;font-size:12.5px;color:#9a9a9a;letter-spacing:-0.316px;">Утечка информации</span>
<svg class="b" style="left:105px;top:928.3px;" width="11" height="11" viewBox="0 0 11 11"><path d="M2.2 1.2 L6.6 5.5 L2.2 9.8" fill="none" stroke="#111" stroke-width="1.9"/></svg>
<svg class="b" style="left:124px;top:925.3px;" width="16" height="16" viewBox="0 0 16 16"><path d="M1 2.6 h5.2 l1.2 1.7 H15 V14.8 H1 Z" fill="#e8a93e"/><rect x="1.7" y="5.3" width="12.6" height="8.8" fill="#fcd268"/><rect x="1.7" y="5.3" width="12.6" height="1.3" fill="#fee39a"/><rect x="1.7" y="12.6" width="12.6" height="1.5" fill="#f8c552"/></svg>
<span class="t" style="left:145px;top:926.80px;line-height:16px;font-size:12.5px;color:#9a9a9a;letter-spacing:-0.316px;">Утечка логинов и паролей</span>
<svg class="b" style="left:105px;top:954.3px;" width="11" height="11" viewBox="0 0 11 11"><path d="M2.2 1.2 L6.6 5.5 L2.2 9.8" fill="none" stroke="#111" stroke-width="1.9"/></svg>
<svg class="b" style="left:124px;top:951.3px;" width="16" height="16" viewBox="0 0 16 16"><path d="M1 2.6 h5.2 l1.2 1.7 H15 V14.8 H1 Z" fill="#e8a93e"/><rect x="1.7" y="5.3" width="12.6" height="8.8" fill="#fcd268"/><rect x="1.7" y="5.3" width="12.6" height="1.3" fill="#fee39a"/><rect x="1.7" y="12.6" width="12.6" height="1.5" fill="#f8c552"/></svg>
<span class="t" style="left:145px;top:952.80px;line-height:16px;font-size:12.5px;color:#9a9a9a;letter-spacing:-0.316px;">Утечка персональных данных</span>
<svg class="b" style="left:105px;top:980.3px;" width="11" height="11" viewBox="0 0 11 11"><path d="M2.2 1.2 L6.6 5.5 L2.2 9.8" fill="none" stroke="#111" stroke-width="1.9"/></svg>
<svg class="b" style="left:124px;top:977.3px;" width="16" height="16" viewBox="0 0 16 16"><path d="M1 2.6 h5.2 l1.2 1.7 H15 V14.8 H1 Z" fill="#e8a93e"/><rect x="1.7" y="5.3" width="12.6" height="8.8" fill="#fcd268"/><rect x="1.7" y="5.3" width="12.6" height="1.3" fill="#fee39a"/><rect x="1.7" y="12.6" width="12.6" height="1.5" fill="#f8c552"/></svg>
<span class="t" style="left:145px;top:978.80px;line-height:16px;font-size:12.5px;color:#9a9a9a;letter-spacing:-0.316px;">Утечки бухгалтерских</span>
<div class="b " style="left:70px;top:1008px;width:567px;height:5px;background:#efefef;border-radius:2.5px;"></div>
<div class="b " style="left:70px;top:1008px;width:289px;height:5px;background:#dcdcdc;border-radius:2.5px;"></div>
<svg class="b" style="left:62px;top:1006px;" width="6" height="9" viewBox="0 0 6 9"><path d="M4.5 1 L1.2 4.5 L4.5 8" fill="none" stroke="#c8c8c8" stroke-width="1.1"/></svg>
<svg class="b" style="left:633px;top:1006px;" width="6" height="9" viewBox="0 0 6 9"><path d="M1.5 1 L4.8 4.5 L1.5 8" fill="none" stroke="#c8c8c8" stroke-width="1.1"/></svg>
<div class="b " style="left:668px;top:900px;width:535px;height:118px;background:#fff;border:1px solid #dcdcdc;border-radius:3px;"></div>
<div class="b " style="left:1214px;top:204px;width:686px;height:814px;background:#fff;border:1px solid #e2e2e2;border-radius:4px;"></div>
<div class="b " style="left:1215px;top:252px;width:684px;height:2px;background:linear-gradient(#e4e4e4,#fff);"></div>
<span class="t" style="left:1684px;top:222.00px;line-height:16px;font-size:12.5px;color:#111;letter-spacing:-0.291px;">Все коммуникации</span>
<svg class="b" style="left:1792px;top:228px;" width="8" height="5" viewBox="0 0 8 5"><path d="M0 0 H8 L4 4.5 Z" fill="#8a8a8a"/></svg>
<svg class="b" style="left:1868px;top:219.5px;" width="19" height="19" viewBox="0 0 19 19"><g transform="translate(9.5 9.5)"><rect x="-2" y="-9.3" width="4" height="5" rx="0.6" fill="#b3b3b3" transform="rotate(0)"/><rect x="-2" y="-9.3" width="4" height="5" rx="0.6" fill="#b3b3b3" transform="rotate(45)"/><rect x="-2" y="-9.3" width="4" height="5" rx="0.6" fill="#b3b3b3" transform="rotate(90)"/><rect x="-2" y="-9.3" width="4" height="5" rx="0.6" fill="#b3b3b3" transform="rotate(135)"/><rect x="-2" y="-9.3" width="4" height="5" rx="0.6" fill="#b3b3b3" transform="rotate(180)"/><rect x="-2" y="-9.3" width="4" height="5" rx="0.6" fill="#b3b3b3" transform="rotate(225)"/><rect x="-2" y="-9.3" width="4" height="5" rx="0.6" fill="#b3b3b3" transform="rotate(270)"/><rect x="-2" y="-9.3" width="4" height="5" rx="0.6" fill="#b3b3b3" transform="rotate(315)"/><circle r="5.6" fill="none" stroke="#b3b3b3" stroke-width="3.2"/></g></svg>
<span class="t" style="left:1692px;top:270.50px;line-height:16px;font-size:11.75px;color:#111;letter-spacing:-0.312px;">04.01.2025</span>
<span class="t" style="left:1753.5px;top:270.50px;line-height:16px;font-size:11.75px;color:#111;letter-spacing:-0.246px;">09:17:08 - 09:33:49</span>
<svg class="b" style="left:1681px;top:274px;" width="7" height="10" viewBox="0 0 7 10"><circle cx="2.5" cy="5" r="3.4" fill="none" stroke="#4a90d9" stroke-width="1.3"/></svg>
<svg class="b" style="left:1866px;top:268px;" width="24" height="16" viewBox="0 0 24 16"><path d="M3.2 3.5 A5 5 0 0 0 3.2 10.5 M5.4 5 A2.6 2.6 0 0 0 5.4 9" fill="none" stroke="#7bc043" stroke-width="1"/><path d="M6.5 12 L8 6 H12 L13.5 12 Z" fill="#e0564a"/><rect x="5.5" y="12" width="9" height="2.2" fill="#4d6fa8"/><circle cx="15.5" cy="6" r="5.3" fill="#e5333f"/><text x="15.5" y="9.2" text-anchor="middle" font-size="8.5" font-weight="bold" font-family="Liberation Sans,sans-serif" fill="#fff">1</text></svg>
<span class="t" style="left:1758.5px;top:295.50px;line-height:16px;font-size:11.5px;color:#111;font-weight:bold;letter-spacing:-0.226px;">Статус инцидента:</span>
<span class="t" style="left:1873.5px;top:292.00px;line-height:22px;font-size:19px;color:#1e9be8;font-weight:bold;">?</span>
<div class="b " style="left:1690px;top:416px;width:197px;height:1px;background:#cfd3da;"></div>
<div class="b " style="left:1400px;top:497px;width:485.5px;height:40.5px;background:#f3f9fd;border:1px solid #b5ddf6;border-radius:4px;"></div>
<span class="t" style="left:1833px;top:519.50px;line-height:16px;font-size:11.75px;color:#8a8a8a;letter-spacing:-0.249px;">09:17:08</span>
<div class="b " style="left:1400px;top:578px;width:485.5px;height:40.5px;background:#fafafa;border:1px solid #e3e3e3;border-radius:4px;"></div>
<span class="t" style="left:1833px;top:600.50px;line-height:16px;font-size:11.75px;color:#8a8a8a;letter-spacing:-0.249px;">09:20:39</span>
<div class="b " style="left:1400px;top:659px;width:485.5px;height:40.5px;background:#f3f9fd;border:1px solid #b5ddf6;border-radius:4px;"></div>
<span class="t" style="left:1833px;top:681.50px;line-height:16px;font-size:11.75px;color:#8a8a8a;letter-spacing:-0.249px;">09:23:18</span>
<div class="b " style="left:1400px;top:740px;width:485.5px;height:57px;background:#fafafa;border:1px solid #e3e3e3;border-radius:4px;"></div>
<span class="t" style="left:1833px;top:779.00px;line-height:16px;font-size:11.75px;color:#8a8a8a;letter-spacing:-0.249px;">09:28:30</span>
<span class="t" style="left:1687px;top:750.00px;line-height:16px;font-size:12.0px;color:#111;letter-spacing:-0.229px;">онимаете, что я ожидаю</span>
<div class="b " style="left:1400px;top:837px;width:485.5px;height:41px;background:#f3f9fd;border:1px solid #b5ddf6;border-radius:4px;"></div>
<span class="t" style="left:1833px;top:860.00px;line-height:16px;font-size:11.75px;color:#8a8a8a;letter-spacing:-0.249px;">09:30:16</span>
<div class="b " style="left:1400px;top:918px;width:485.5px;height:40.5px;background:#fafafa;border:1px solid #e3e3e3;border-radius:4px;"></div>
<span class="t" style="left:1833px;top:940.50px;line-height:16px;font-size:11.75px;color:#8a8a8a;letter-spacing:-0.249px;">09:33:49</span>
<div class="b " style="left:1214px;top:984px;width:674px;height:1px;background:#d9d9d9;"></div>
<span class="t" style="left:1235px;top:989.50px;line-height:16px;font-size:11.25px;color:#111;font-weight:bold;letter-spacing:-0.312px;">Всего: 6</span>
<div class="b " style="left:237px;top:78px;width:1450px;height:922.5px;background:#8e8e8e;"></div>
<div class="b " style="left:237px;top:78px;width:1450px;height:922.5px;background:#10458a;border-radius:9px;"></div>
<div class="b " style="left:249px;top:112px;width:1426px;height:876px;background:#fff;border-radius:5px;"></div>
<span class="t" style="left:757px;top:85.50px;line-height:20px;font-size:14px;color:#fff;letter-spacing:-0.072px;">Редактирование правила безопасности для поиска по словарю</span>
<svg class="b" style="left:1662px;top:90px;" width="10" height="10" viewBox="0 0 10 10"><path d="M0.5 0.5 L9.5 9.5 M9.5 0.5 L0.5 9.5" stroke="#c9d6ea" stroke-width="1.0" fill="none"/></svg>
<svg class="b" style="left:1672px;top:985px;" width="12" height="12" viewBox="0 0 12 12"><rect x="9.0" y="9.0" width="1.5" height="1.5" fill="#c9d6ea"/><rect x="9.0" y="6.5" width="1.5" height="1.5" fill="#c9d6ea"/><rect x="9.0" y="4.0" width="1.5" height="1.5" fill="#c9d6ea"/><rect x="9.0" y="1.5" width="1.5" height="1.5" fill="#c9d6ea"/><rect x="6.5" y="9.0" width="1.5" height="1.5" fill="#c9d6ea"/><rect x="6.5" y="6.5" width="1.5" height="1.5" fill="#c9d6ea"/><rect x="6.5" y="4.0" width="1.5" height="1.5" fill="#c9d6ea"/><rect x="4.0" y="9.0" width="1.5" height="1.5" fill="#c9d6ea"/><rect x="4.0" y="6.5" width="1.5" height="1.5" fill="#c9d6ea"/><rect x="1.5" y="9.0" width="1.5" height="1.5" fill="#c9d6ea"/></svg>
<div class="b " style="left:273px;top:161px;width:1377.5px;height:758.5px;background:#fff;border:1px solid #d3d8e0;border-radius:0 0 4px 4px;box-shadow:0 1px 1px rgba(0,0,0,0.06);"></div>
<div class="b " style="left:273px;top:130px;width:154px;height:32px;background:#fff;border:1px solid #dcdfe5;border-radius:4px 4px 0 0;border-bottom:none;box-shadow:0 -1px 2px rgba(0,0,0,0.06);"></div>
<span class="t" style="left:293px;top:137.00px;line-height:20px;font-size:14.5px;color:#1a1a1a;letter-spacing:-0.275px;">Общие настройки</span>
<div class="b " style="left:430px;top:130px;width:223.5px;height:31px;background:#dfe3ea;border:1px solid #cfd4dc;border-radius:4px 4px 0 0;border-bottom:none;"></div>
<span class="t" style="left:450px;top:137.00px;line-height:20px;font-size:14.25px;color:#1a1a1a;letter-spacing:-0.205px;">Дополнительные параметры</span>
<div class="b " style="left:656px;top:130px;width:195.5px;height:31px;background:#dfe3ea;border:1px solid #cfd4dc;border-radius:4px 4px 0 0;border-bottom:none;"></div>
<span class="t" style="left:676px;top:137.00px;line-height:20px;font-size:14.25px;color:#1a1a1a;letter-spacing:-0.215px;">Настройки уведомления</span>
<div class="b " style="left:854px;top:130px;width:132px;height:31px;background:#dfe3ea;border:1px solid #cfd4dc;border-radius:4px 4px 0 0;border-bottom:none;"></div>
<span class="t" style="left:874px;top:137.00px;line-height:20px;font-size:14.5px;color:#1a1a1a;letter-spacing:-0.294px;">Уровень риска</span>
<div class="b " style="left:989px;top:130px;width:131px;height:31px;background:#dfe3ea;border:1px solid #cfd4dc;border-radius:4px 4px 0 0;border-bottom:none;"></div>
<span class="t" style="left:1009px;top:137.00px;line-height:20px;font-size:14.0px;color:#1a1a1a;letter-spacing:-0.291px;">Права доступа</span>
<div class="b " style="left:1123px;top:130px;width:149px;height:31px;background:#dfe3ea;border:1px solid #cfd4dc;border-radius:4px 4px 0 0;border-bottom:none;"></div>
<span class="t" style="left:1143px;top:137.00px;line-height:20px;font-size:14.25px;color:#1a1a1a;letter-spacing:-0.225px;">Прочие действия</span>
<div class="b " style="left:295px;top:186px;width:1337px;height:141.5px;background:#e1eff9;border-radius:2px;"></div>
<svg class="b" style="left:308px;top:200px;" width="26" height="28" viewBox="0 0 26 28"><rect x="2.5" y="0.5" width="21" height="23" fill="#fdfdff" stroke="#8fb2dc" stroke-width="1"/><rect x="0.3" y="23.3" width="25.4" height="4.5" rx="0.6" fill="#5bb8f2"/><rect x="0.3" y="23.3" width="25.4" height="1.1" fill="#8fd0f8"/><text x="13" y="20.5" text-anchor="middle" font-family="Liberation Serif,serif" font-size="23" fill="#5a35e2">A</text></svg>
<div class="b " style="left:347px;top:197px;width:1248.5px;height:31.5px;background:#f4f4f4;border:1px solid #e2e2e2;border-radius:3px;"></div>
<span class="t" style="left:355px;top:205.50px;line-height:16px;font-size:12px;color:#111;letter-spacing:-0.041px;">Финансовые махинации</span>
<div class="b " style="left:347px;top:239px;width:1248.5px;height:74.5px;background:#f4f4f4;border:1px solid #e2e2e2;border-radius:3px;"></div>
<span class="t" style="left:355px;top:247.00px;line-height:16px;font-size:12px;color:#111;letter-spacing:-0.091px;">Контроль переписок и файлов, связанных с финансовыми махинациями</span>
<svg class="b" style="left:1608.5px;top:210.5px;" width="11" height="8" viewBox="0 0 11 8"><path d="M1.2 1.4 L5.5 5.8 L9.8 1.4" fill="none" stroke="#666" stroke-width="1.9"/></svg>
<div class="b " style="left:300px;top:343.5px;width:1326px;height:158.5px;background:#fff;border:1.6px solid #d6d6d6;border-radius:4px;box-shadow:0 1px 1px rgba(0,0,0,0.06);"></div>
<div class="b " style="left:306px;top:338px;width:161px;height:12px;background:#fff;"></div>
<span class="t" style="left:309.5px;top:336.00px;line-height:16px;font-size:12.25px;color:#777;letter-spacing:-0.192px;">Условия поиска по словарю</span>
<svg class="b" style="left:320px;top:372px;" width="13" height="15" viewBox="0 0 13 15"><path d="M1.2 0.8 V13 Q1.2 14.4 2.8 14.4 H12" fill="none" stroke="#2f5f8a" stroke-width="1.4"/><rect x="2.6" y="0.6" width="9.6" height="10.8" fill="#cfe6fa" stroke="#8fbfe8" stroke-width="0.8"/><rect x="2.6" y="11.6" width="9.6" height="1.6" fill="#fff" stroke="#8fbfe8" stroke-width="0.6"/><text x="7.4" y="9.3" text-anchor="middle" font-family="Liberation Sans,sans-serif" font-size="8" font-weight="bold" fill="#2f5f8a">A</text></svg>
<span class="t" style="left:338px;top:372.00px;line-height:16px;font-size:11.75px;color:#111;letter-spacing:-0.298px;">Словарь:</span>
<span class="t" style="left:338px;top:405.50px;line-height:16px;font-size:12.25px;color:#111;letter-spacing:-0.244px;">Порог срабатывания:</span>
<div class="b " style="left:481.5px;top:363px;width:300.3px;height:32.5px;background:#f8f8f8;border:1px solid #ececec;border-radius:3px;"></div>
<svg class="b" style="left:489.5px;top:372px;" width="12" height="15" viewBox="0 0 12 15"><path d="M1 0.8 V13 Q1 14.4 2.6 14.4 H11.4" fill="none" stroke="#7cc04a" stroke-width="1.3"/><rect x="2.4" y="0.6" width="9" height="10.8" fill="#d9efc6" stroke="#a9d98a" stroke-width="0.8"/><rect x="2.4" y="11.6" width="9" height="1.6" fill="#fff" stroke="#a9d98a" stroke-width="0.6"/><path d="M6.9 3 V9 M4.3 4.5 L9.5 7.5 M9.5 4.5 L4.3 7.5" stroke="#7cc04a" stroke-width="1"/></svg>
<span class="t" style="left:513.5px;top:372.50px;line-height:16px;font-size:12.25px;color:#b4b4b4;letter-spacing:-0.189px;width:245.5px;overflow:hidden;">Взяточничество и финансовые махинации (26)</span>
<svg class="b" style="left:766px;top:375px;" width="10.5" height="10.5" viewBox="0 0 10.5 10.5"><path d="M0.5 0.5 L10.0 10.0 M10.0 0.5 L0.5 10.0" stroke="#cfcfcf" stroke-width="1.1" fill="none"/></svg>
<div class="b " style="left:792px;top:363px;width:30px;height:32.5px;background:#f8f8f8;border:1px solid #ececec;border-radius:3px;"></div>
<svg class="b" style="left:802px;top:372px;" width="12" height="15" viewBox="0 0 12 15"><path d="M1 0.8 V13 Q1 14.4 2.6 14.4 H11.4" fill="none" stroke="#6f97b8" stroke-width="1.3"/><rect x="2.4" y="0.6" width="9" height="10.8" fill="#c5e0f7" stroke="#9cc6ea" stroke-width="0.8"/><rect x="2.4" y="11.6" width="9" height="1.6" fill="#fff" stroke="#9cc6ea" stroke-width="0.6"/><text x="6.9" y="9" text-anchor="middle" font-family="Liberation Sans,sans-serif" font-size="7.5" fill="#6f97b8">A</text></svg>
<div class="b " style="left:482.5px;top:416px;width:299px;height:4.5px;background:#e2e2e2;border-radius:2.2px;"></div>
<div class="b " style="left:491.7px;top:410.8px;width:6.5px;height:15px;background:#d9d9d9;border-radius:3px;"></div>
<div class="b " style="left:792.8px;top:402px;width:64.8px;height:32.2px;background:#f8f8f8;border:1px solid #ececec;border-radius:3px;"></div>
<div class="b " style="left:844px;top:403.5px;width:1px;height:29.5px;background:#ececec;"></div>
<div class="b " style="left:845px;top:417.8px;width:12px;height:1px;background:#ececec;"></div>
<span class="t" style="left:800px;top:411.00px;line-height:16px;font-size:12.5px;color:#8a8a8a;">2</span>
<svg class="b" style="left:846.5px;top:407px;" width="8" height="5" viewBox="0 0 8 5"><path d="M0 4.5 H8 L4 0 Z" fill="#bdbdbd"/></svg>
<svg class="b" style="left:846.5px;top:424px;" width="8" height="5" viewBox="0 0 8 5"><path d="M0 0 H8 L4 4.5 Z" fill="#bdbdbd"/></svg>
<span class="t" style="left:861.5px;top:411.00px;line-height:16px;font-size:11.75px;color:#111;letter-spacing:-0.197px;">из 26</span>
<svg class="b" style="left:482.7px;top:438.5px;" width="15" height="15" viewBox="0 0 14 14"><circle cx="7" cy="7" r="7" fill="#f3a11c"/><circle cx="7" cy="7" r="6" fill="#f8b43a"/><rect x="6" y="3" width="2" height="5.4" rx="0.8" fill="#fff"/><circle cx="7" cy="10.4" r="1.1" fill="#fff"/></svg>
<span class="t" style="left:500.5px;top:439.00px;line-height:16px;font-size:12.5px;color:#111;letter-spacing:-0.289px;">Обработка правила может занять продолжительное время</span>
<svg class="b" style="left:482px;top:462.2px;" width="16.3" height="16.3" viewBox="0 0 15.8 15.8"><rect x="0" y="0" width="15.8" height="15.8" rx="2.4" fill="#d6d6d6"/><path d="M3.4 8.2 L6.7 11.5 L12.4 4" fill="none" stroke="#fff" stroke-width="2"/></svg>
<span class="t" style="left:502.5px;top:462.50px;line-height:16px;font-size:12.25px;color:#777;letter-spacing:-0.234px;">С учетом морфологии</span>
<div class="b " style="left:295px;top:521px;width:1336.5px;height:318.7px;background:#fff;border:1px solid #d9d9d9;border-radius:3px;border-left:4px solid #9bc356;"></div>
<div class="b " style="left:299px;top:522px;width:1331.5px;height:41.7px;background:#f4f4f4;border-bottom:1px solid #dcdcdc;"></div>
<svg class="b" style="left:306.3px;top:535.6px;" width="6" height="16" viewBox="0 0 6 16"><rect x="0" y="0.0" width="1.9" height="1.9" fill="#c6c6c6"/><rect x="4" y="0.0" width="1.9" height="1.9" fill="#c6c6c6"/><rect x="0" y="4.35" width="1.9" height="1.9" fill="#c6c6c6"/><rect x="4" y="4.35" width="1.9" height="1.9" fill="#c6c6c6"/><rect x="0" y="8.7" width="1.9" height="1.9" fill="#c6c6c6"/><rect x="4" y="8.7" width="1.9" height="1.9" fill="#c6c6c6"/><rect x="0" y="13.049999999999999" width="1.9" height="1.9" fill="#c6c6c6"/><rect x="4" y="13.049999999999999" width="1.9" height="1.9" fill="#c6c6c6"/></svg>
<span class="t" style="left:333px;top:535.50px;line-height:16px;font-size:12.0px;color:#777;letter-spacing:-0.314px;">Условие</span>
<div class="b " style="left:386px;top:527px;width:43.5px;height:31.3px;background:#f7f7f7;border:1px solid #e8e8e8;border-radius:3px;"></div>
<span class="t" style="left:393.5px;top:535.00px;line-height:16px;font-size:13.5px;color:#8a8a8a;">И</span>
<svg class="b" style="left:414px;top:541px;" width="8" height="5" viewBox="0 0 8 5"><path d="M0 0 H8 L4 4.5 Z" fill="#9a9a9a"/></svg>
<svg class="b" style="left:1612.3px;top:535px;" width="4.4" height="15.4" viewBox="-0.2 -0.2 4.4 15.4"><circle cx="2" cy="2" r="1.55" fill="#666"/><circle cx="2" cy="7.5" r="1.55" fill="#666"/><circle cx="2" cy="13" r="1.55" fill="#666"/></svg>
<div class="b " style="left:1622px;top:575px;width:5.8px;height:158px;background:#dedede;border-radius:2.9px;"></div>
<svg class="b" style="left:1621px;top:567.5px;" width="8" height="5" viewBox="0 0 8 5"><path d="M0.8 4.2 L4 1.2 L7.2 4.2" fill="none" stroke="#cccccc" stroke-width="1.4"/></svg>
<svg class="b" style="left:1621px;top:829px;" width="8" height="5" viewBox="0 0 8 5"><path d="M0.8 0.8 L4 3.8 L7.2 0.8" fill="none" stroke="#cccccc" stroke-width="1.4"/></svg>
<div class="b" style="left:299px;top:563.5px;width:1320px;height:275.2px;overflow:hidden;">
<div class="b " style="left:28px;top:13.200000000000045px;width:1282.5px;height:300px;background:#f4f4f4;border:1px solid #dcdcdc;border-radius:3px;border-left:4px solid #4fd0e0;"></div>
<svg class="b" style="left:39.10000000000002px;top:27.5px;" width="6" height="16" viewBox="0 0 6 16"><rect x="0" y="0.0" width="1.9" height="1.9" fill="#c6c6c6"/><rect x="4" y="0.0" width="1.9" height="1.9" fill="#c6c6c6"/><rect x="0" y="4.35" width="1.9" height="1.9" fill="#c6c6c6"/><rect x="4" y="4.35" width="1.9" height="1.9" fill="#c6c6c6"/><rect x="0" y="8.7" width="1.9" height="1.9" fill="#c6c6c6"/><rect x="4" y="8.7" width="1.9" height="1.9" fill="#c6c6c6"/><rect x="0" y="13.049999999999999" width="1.9" height="1.9" fill="#c6c6c6"/><rect x="4" y="13.049999999999999" width="1.9" height="1.9" fill="#c6c6c6"/></svg>
<div class="b " style="left:66px;top:19.0px;width:122px;height:31px;background:#f6f6f6;border:1px solid #ebebeb;border-radius:3px;"></div>
<span class="t" style="left:73px;top:27.00px;line-height:16px;font-size:12.25px;color:#8a8a8a;letter-spacing:-0.219px;">Область поиска</span>
<svg class="b" style="left:172px;top:33.0px;" width="8" height="5" viewBox="0 0 8 5"><path d="M0 0 H8 L4 4.5 Z" fill="#a8a8a8"/></svg>
<svg class="b" style="left:1203.5px;top:32.5px;" width="11" height="7" viewBox="0 0 11 7"><path d="M1 6 L5.5 1.7 L10 6" fill="none" stroke="#cdcdcd" stroke-width="1.6"/></svg>
<svg class="b" style="left:1263.5px;top:28.0px;" width="4.4" height="15.4" viewBox="-0.2 -0.2 4.4 15.4"><circle cx="2" cy="2" r="1.55" fill="#6a6a6a"/><circle cx="2" cy="7.5" r="1.55" fill="#6a6a6a"/><circle cx="2" cy="13" r="1.55" fill="#6a6a6a"/></svg>
<svg class="b" style="left:1284.3px;top:30.5px;" width="11" height="11" viewBox="0 0 11 11"><path d="M0.5 0.5 L10.5 10.5 M10.5 0.5 L0.5 10.5" stroke="#666" stroke-width="1.5" fill="none"/></svg>
<div class="b " style="left:363px;top:51.5px;width:1px;height:230px;background:#aab5cc;"></div>
<div class="b " style="left:712px;top:51.5px;width:1px;height:230px;background:#aab5cc;"></div>
<div class="b " style="left:944.5px;top:51.5px;width:1px;height:230px;background:#aab5cc;"></div>
<svg class="b" style="left:200px;top:26.299999999999955px;" width="16.6" height="16.6" viewBox="0 0 16 16"><rect x="1" y="3" width="14" height="10.5" fill="#a9c9ec" stroke="#4f80ba" stroke-width="1"/><path d="M1.5 3.5 L8.0 9.09 L14.5 3.5 Z" fill="#6f9dd2"/><path d="M1.4 3.4 L8.0 9.09 L14.6 3.4" fill="none" stroke="#eef4fb" stroke-width="0.9"/><path d="M1.4 13.1 L6.04 7.83 M14.6 13.1 L9.96 7.83" stroke="#dfeaf7" stroke-width="0.7"/></svg>
<svg class="b" style="left:218.89999999999998px;top:26.399999999999977px;" width="16" height="16.8" viewBox="0 0 15.8 15.8" preserveAspectRatio="none"><rect x="0" y="0" width="15.8" height="15.8" rx="2.4" fill="#d6d6d6"/><path d="M3.4 8.2 L6.7 11.5 L12.4 4" fill="none" stroke="#fff" stroke-width="2"/></svg>
<span class="t" style="left:237.10000000000002px;top:27.30px;line-height:16px;font-size:12.25px;color:#a4a4a4;letter-spacing:-0.281px;">Почта</span>
<svg class="b" style="left:217.60000000000002px;top:50.14999999999998px;" width="16.8" height="16.8" viewBox="0 0 16 16"><rect x="3" y="1.5" width="12" height="9.5" fill="#a9c9ec" stroke="#4f80ba" stroke-width="1"/><path d="M3.5 2.0 L9.0 7.01 L14.5 2.0 Z" fill="#6f9dd2"/><path d="M3.4 1.9 L9.0 7.01 L14.6 1.9" fill="none" stroke="#eef4fb" stroke-width="0.9"/><path d="M3.4 10.6 L7.32 5.87 M14.6 10.6 L10.68 5.87" stroke="#dfeaf7" stroke-width="0.7"/><circle cx="5" cy="11" r="4.3" fill="#fff" stroke="#9ab2d0" stroke-width="0.8"/><path d="M2.2 11 L5.2 8.4 V10 H8 V12 H5.2 V13.6 Z" fill="#e8482f"/></svg>
<svg class="b" style="left:238.70000000000005px;top:50.35000000000002px;" width="16" height="16.8" viewBox="0 0 15.8 15.8" preserveAspectRatio="none"><rect x="0" y="0" width="15.8" height="15.8" rx="2.4" fill="#d6d6d6"/><path d="M3.4 8.2 L6.7 11.5 L12.4 4" fill="none" stroke="#fff" stroke-width="2"/></svg>
<span class="t" style="left:256.9000000000001px;top:51.50px;line-height:16px;font-size:11.75px;color:#a4a4a4;letter-spacing:-0.919px;">POP3</span>
<svg class="b" style="left:217.60000000000002px;top:73.77499999999998px;" width="16.8" height="16.8" viewBox="0 0 16 16"><rect x="1" y="1.5" width="12" height="9.5" fill="#a9c9ec" stroke="#4f80ba" stroke-width="1"/><path d="M1.5 2.0 L7.0 7.01 L12.5 2.0 Z" fill="#6f9dd2"/><path d="M1.4 1.9 L7.0 7.01 L12.6 1.9" fill="none" stroke="#eef4fb" stroke-width="0.9"/><path d="M1.4 10.6 L5.32 5.87 M12.6 10.6 L8.68 5.87" stroke="#dfeaf7" stroke-width="0.7"/><circle cx="11" cy="11" r="4.3" fill="#fff" stroke="#9ab2d0" stroke-width="0.8"/><path d="M13.8 11 L10.8 8.4 V10 H8 V12 H10.8 V13.6 Z" fill="#5cb531"/></svg>
<svg class="b" style="left:238.70000000000005px;top:73.97500000000002px;" width="16" height="16.8" viewBox="0 0 15.8 15.8" preserveAspectRatio="none"><rect x="0" y="0" width="15.8" height="15.8" rx="2.4" fill="#d6d6d6"/><path d="M3.4 8.2 L6.7 11.5 L12.4 4" fill="none" stroke="#fff" stroke-width="2"/></svg>
<span class="t" style="left:256.9000000000001px;top:75.50px;line-height:16px;font-size:11.75px;color:#a4a4a4;letter-spacing:-0.850px;">SMTP</span>
<svg class="b" style="left:217.60000000000002px;top:97.39999999999998px;" width="16.8" height="16.8" viewBox="0 0 16 16"><rect x="1.5" y="1" width="13" height="9" fill="#a9c9ec" stroke="#4f80ba" stroke-width="1"/><path d="M2.0 1.5 L8.0 6.22 L14.0 1.5 Z" fill="#6f9dd2"/><path d="M1.9 1.4 L8.0 6.22 L14.1 1.4" fill="none" stroke="#eef4fb" stroke-width="0.9"/><path d="M1.9 9.6 L6.18 5.140000000000001 M14.1 9.6 L9.82 5.140000000000001" stroke="#dfeaf7" stroke-width="0.7"/><path d="M0.5 13 L3.6 10.6 V12.1 H6.8 V13.9 H3.6 V15.4 Z" fill="#e8482f"/><path d="M15.5 13 L12.4 10.6 V12.1 H9.2 V13.9 H12.4 V15.4 Z" fill="#5cb531"/></svg>
<svg class="b" style="left:238.70000000000005px;top:97.60000000000002px;" width="16" height="16.8" viewBox="0 0 15.8 15.8" preserveAspectRatio="none"><rect x="0" y="0" width="15.8" height="15.8" rx="2.4" fill="#d6d6d6"/><path d="M3.4 8.2 L6.7 11.5 L12.4 4" fill="none" stroke="#fff" stroke-width="2"/></svg>
<span class="t" style="left:256.9000000000001px;top:98.50px;line-height:16px;font-size:11.75px;color:#a4a4a4;letter-spacing:-0.210px;">IMAP</span>
<svg class="b" style="left:217.60000000000002px;top:121.02499999999998px;" width="16.8" height="16.8" viewBox="0 0 16 16"><rect x="6" y="3" width="9.5" height="9" fill="#fff" stroke="#0f6cbd" stroke-width="1"/><path d="M6.3 3.4 L10.8 7.4 L15.2 3.4" fill="none" stroke="#0f6cbd" stroke-width="1"/><path d="M0.5 2 L8.5 0.6 V15.4 L0.5 14 Z" fill="#0f6cbd"/><ellipse cx="4.5" cy="8" rx="2" ry="2.7" fill="none" stroke="#fff" stroke-width="1.3"/></svg>
<svg class="b" style="left:238.70000000000005px;top:121.22500000000002px;" width="16" height="16.8" viewBox="0 0 15.8 15.8" preserveAspectRatio="none"><rect x="0" y="0" width="15.8" height="15.8" rx="2.4" fill="#d6d6d6"/><path d="M3.4 8.2 L6.7 11.5 L12.4 4" fill="none" stroke="#fff" stroke-width="2"/></svg>
<span class="t" style="left:256.9000000000001px;top:122.50px;line-height:16px;font-size:11.75px;color:#a4a4a4;letter-spacing:-0.210px;">MAPI</span>
<svg class="b" style="left:217.60000000000002px;top:144.64999999999998px;" width="16.8" height="16.8" viewBox="0 0 16 16"><rect x="1" y="3" width="14" height="10.5" fill="#a9c9ec" stroke="#4f80ba" stroke-width="1"/><path d="M1.5 3.5 L8.0 9.09 L14.5 3.5 Z" fill="#6f9dd2"/><path d="M1.4 3.4 L8.0 9.09 L14.6 3.4" fill="none" stroke="#eef4fb" stroke-width="0.9"/><path d="M1.4 13.1 L6.04 7.83 M14.6 13.1 L9.96 7.83" stroke="#dfeaf7" stroke-width="0.7"/></svg>
<svg class="b" style="left:238.70000000000005px;top:144.85000000000002px;" width="16" height="16.8" viewBox="0 0 15.8 15.8" preserveAspectRatio="none"><rect x="0" y="0" width="15.8" height="15.8" rx="2.4" fill="#d6d6d6"/><path d="M3.4 8.2 L6.7 11.5 L12.4 4" fill="none" stroke="#fff" stroke-width="2"/></svg>
<span class="t" style="left:256.9000000000001px;top:145.50px;line-height:16px;font-size:12.5px;color:#a4a4a4;letter-spacing:-0.248px;">Прочая почта</span>
<svg class="b" style="left:217.60000000000002px;top:168.27499999999998px;" width="16.8" height="16.8" viewBox="0 0 16 16"><path d="M11.5 4.2 L6.2 12.2 Q5 14 3.6 13 Q2.2 12 3.4 10.2 L8.6 2.6 Q10 0.6 12 1.9 Q14 3.3 12.6 5.4 L7.6 12.8" fill="none" stroke="#7d9cc4" stroke-width="1.2" stroke-linecap="round"/></svg>
<svg class="b" style="left:238.70000000000005px;top:168.47500000000002px;" width="16" height="16.8" viewBox="0 0 15.8 15.8" preserveAspectRatio="none"><rect x="0" y="0" width="15.8" height="15.8" rx="2.4" fill="#d6d6d6"/><path d="M3.4 8.2 L6.7 11.5 L12.4 4" fill="none" stroke="#fff" stroke-width="2"/></svg>
<span class="t" style="left:256.9000000000001px;top:169.50px;line-height:16px;font-size:12.0px;color:#a4a4a4;letter-spacing:-0.160px;">Вложения</span>
<svg class="b" style="left:367.5px;top:26.299999999999955px;" width="16.6" height="16.6" viewBox="0 0 16 16"><path d="M1 6 Q1 1.5 6.5 1.5 Q12 1.5 12 6 Q12 10 7 10.3 L3.5 12.5 L4.3 9.6 Q1 8.6 1 6 Z" fill="#e6eef8" stroke="#5b8fc8" stroke-width="1"/><circle cx="10.5" cy="10.2" r="4.6" fill="#cfe3f7" stroke="#5b8fc8" stroke-width="1"/><path d="M13 14 L15 15.6 L14.4 12.8" fill="#cfe3f7" stroke="#5b8fc8" stroke-width="0.8"/><path d="M8.3 9.2 h4.4 M8.3 11.2 h4.4" stroke="#3f7fc8" stroke-width="1"/></svg>
<svg class="b" style="left:386.4px;top:26.399999999999977px;" width="16" height="16.8" viewBox="0 0 15.8 15.8" preserveAspectRatio="none"><rect x="0" y="0" width="15.8" height="15.8" rx="2.4" fill="#d6d6d6"/><path d="M3.4 8.2 L6.7 11.5 L12.4 4" fill="none" stroke="#fff" stroke-width="2"/></svg>
<span class="t" style="left:404.6px;top:27.30px;line-height:16px;font-size:12.25px;color:#a4a4a4;letter-spacing:-0.236px;">Мессенджеры</span>
<svg class="b" style="left:385.80000000000007px;top:50.14999999999998px;" width="16.8" height="16.8" viewBox="0 0 16 16"><g transform="translate(8 8) scale(0.94) translate(-8 -8)"><circle cx="8" cy="8" r="7.3" fill="#18a8ea"/><text x="8" y="12.4" text-anchor="middle" font-family="Liberation Sans,sans-serif" font-size="12" font-weight="bold" fill="#fff">S</text></g></svg>
<svg class="b" style="left:406.70000000000005px;top:50.35000000000002px;" width="16" height="16.8" viewBox="0 0 15.8 15.8" preserveAspectRatio="none"><rect x="0" y="0" width="15.8" height="15.8" rx="2.4" fill="#d6d6d6"/><path d="M3.4 8.2 L6.7 11.5 L12.4 4" fill="none" stroke="#fff" stroke-width="2"/></svg>
<span class="t" style="left:424.9000000000001px;top:51.50px;line-height:16px;font-size:11.75px;color:#a4a4a4;letter-spacing:-0.516px;">Skype</span>
<svg class="b" style="left:385.80000000000007px;top:73.77499999999998px;" width="16.8" height="16.8" viewBox="0 0 16 16"><g transform="translate(8 8) scale(0.94) translate(-8 -8)"><circle cx="8" cy="8" r="7.3" fill="#64a9dc"/><path d="M3.2 8 L12.2 4.2 L10.6 12 L7.8 10 L6.6 11.4 L6.4 9.2 L10.4 5.8 L5.6 8.8 Z" fill="#fff"/></g></svg>
<svg class="b" style="left:406.70000000000005px;top:73.97500000000002px;" width="16" height="16.8" viewBox="0 0 15.8 15.8" preserveAspectRatio="none"><rect x="0" y="0" width="15.8" height="15.8" rx="2.4" fill="#d6d6d6"/><path d="M3.4 8.2 L6.7 11.5 L12.4 4" fill="none" stroke="#fff" stroke-width="2"/></svg>
<span class="t" style="left:424.9000000000001px;top:75.50px;line-height:16px;font-size:11.75px;color:#a4a4a4;letter-spacing:-0.177px;">Telegram</span>
<svg class="b" style="left:385.80000000000007px;top:97.39999999999998px;" width="16.8" height="16.8" viewBox="0 0 16 16"><g transform="translate(8 8) scale(0.94) translate(-8 -8)"><circle cx="8" cy="8" r="7.3" fill="#6545a8"/><circle cx="8" cy="8" r="6.1" fill="none" stroke="#cdbfe8" stroke-width="0.7"/><rect x="4.6" y="3.8" width="6.8" height="7.4" rx="2.4" fill="none" stroke="#fff" stroke-width="1.1"/><path d="M6.4 5.8 Q6.2 8.6 9.6 9.6" fill="none" stroke="#fff" stroke-width="1.1"/><path d="M6.4 11 V13 L8 11.2" fill="#fff"/></g></svg>
<svg class="b" style="left:406.70000000000005px;top:97.60000000000002px;" width="16" height="16.8" viewBox="0 0 15.8 15.8" preserveAspectRatio="none"><rect x="0" y="0" width="15.8" height="15.8" rx="2.4" fill="#d6d6d6"/><path d="M3.4 8.2 L6.7 11.5 L12.4 4" fill="none" stroke="#fff" stroke-width="2"/></svg>
<span class="t" style="left:424.9000000000001px;top:98.50px;line-height:16px;font-size:12.0px;color:#a4a4a4;letter-spacing:-0.178px;">Viber</span>
<svg class="b" style="left:385.80000000000007px;top:121.02499999999998px;" width="16.8" height="16.8" viewBox="0 0 16 16"><g transform="translate(8 8) scale(0.94) translate(-8 -8)"><path d="M8 0.8 A7.2 7.2 0 1 1 4.2 14.1 L0.9 15.1 L1.9 11.9 A7.2 7.2 0 0 1 8 0.8 Z" fill="#4ab648"/><path d="M5.4 4.2 Q4.2 5.4 5.2 7.4 Q6.6 10 9 11 Q10.8 11.7 11.8 10.4 L10.2 9.2 L9.3 9.9 Q7.4 9 6.5 7 L7.2 6.1 L6.3 4.2 Z" fill="#fff"/></g></svg>
<svg class="b" style="left:406.70000000000005px;top:121.22500000000002px;" width="16" height="16.8" viewBox="0 0 15.8 15.8" preserveAspectRatio="none"><rect x="0" y="0" width="15.8" height="15.8" rx="2.4" fill="#d6d6d6"/><path d="M3.4 8.2 L6.7 11.5 L12.4 4" fill="none" stroke="#fff" stroke-width="2"/></svg>
<span class="t" style="left:424.9000000000001px;top:122.50px;line-height:16px;font-size:12.0px;color:#a4a4a4;letter-spacing:-0.181px;">WhatsApp</span>
<svg class="b" style="left:385.80000000000007px;top:144.64999999999998px;" width="16.8" height="16.8" viewBox="0 0 16 16"><path d="M0.5 2 L8.5 0.6 V15.4 L0.5 14 Z" fill="#0f6cbd"/><path d="M3.3 4.6 V11.2 H6.4" fill="none" stroke="#fff" stroke-width="1.5"/><path d="M9.8 7.2 Q10.6 4.6 13.2 5.2" fill="none" stroke="#2a7fd4" stroke-width="1.5"/><path d="M12.6 3.4 L15.4 5.6 L12.4 7.4 Z" fill="#2a7fd4"/><path d="M15.2 8.8 Q14.4 11.4 11.8 10.8" fill="none" stroke="#2a7fd4" stroke-width="1.5"/><path d="M12.4 12.6 L9.6 10.4 L12.6 8.6 Z" fill="#2a7fd4"/></svg>
<svg class="b" style="left:406.70000000000005px;top:144.85000000000002px;" width="16" height="16.8" viewBox="0 0 15.8 15.8" preserveAspectRatio="none"><rect x="0" y="0" width="15.8" height="15.8" rx="2.4" fill="#d6d6d6"/><path d="M3.4 8.2 L6.7 11.5 L12.4 4" fill="none" stroke="#fff" stroke-width="2"/></svg>
<span class="t" style="left:424.9000000000001px;top:145.50px;line-height:16px;font-size:11.75px;color:#a4a4a4;letter-spacing:-0.599px;">Lync</span>
<svg class="b" style="left:385.80000000000007px;top:168.27499999999998px;" width="16.8" height="16.8" viewBox="0 0 16 16"><path d="M3.2 1.2 Q1 2.6 2 5.8 Q3.6 10.6 8.6 13.8 Q11.8 15.6 13.8 13.4 L14.6 12.2 L11.2 9.6 L9.6 11 Q6.6 9.2 5.4 6.2 L7 4.8 L4.8 0.9 Z" fill="#e0533c"/></svg>
<svg class="b" style="left:406.70000000000005px;top:168.47500000000002px;" width="16" height="16.8" viewBox="0 0 15.8 15.8" preserveAspectRatio="none"><rect x="0" y="0" width="15.8" height="15.8" rx="2.4" fill="#d6d6d6"/><path d="M3.4 8.2 L6.7 11.5 L12.4 4" fill="none" stroke="#fff" stroke-width="2"/></svg>
<span class="t" style="left:424.9000000000001px;top:169.50px;line-height:16px;font-size:11.75px;color:#a4a4a4;letter-spacing:-1.300px;">SIP</span>
<svg class="b" style="left:385.80000000000007px;top:191.89999999999998px;" width="16.8" height="16.8" viewBox="0 0 16 16"><path d="M0.8 2 Q4 3.4 6.2 7.6 Q7.4 10 7.4 13.4 Q3.4 11.4 2 7.4 Q1.4 5.4 0.8 2 Z" fill="#d9541e"/><path d="M15.2 2 Q12 3.4 9.8 7.6 Q8.6 10 8.6 13.4 Q12.6 11.4 14 7.4 Q14.6 5.4 15.2 2 Z" fill="#6fa625"/><path d="M3 2.8 Q6.6 6 7.6 11.6 M13 2.8 Q9.4 6 8.4 11.6" stroke="#1c3a6e" stroke-width="0.9" fill="none"/><path d="M5 13 Q8 15.6 11 13" stroke="#c03a1a" stroke-width="1" fill="none"/></svg>
<svg class="b" style="left:406.70000000000005px;top:192.10000000000002px;" width="16" height="16.8" viewBox="0 0 15.8 15.8" preserveAspectRatio="none"><rect x="0" y="0" width="15.8" height="15.8" rx="2.4" fill="#d6d6d6"/><path d="M3.4 8.2 L6.7 11.5 L12.4 4" fill="none" stroke="#fff" stroke-width="2"/></svg>
<span class="t" style="left:424.9000000000001px;top:193.50px;line-height:16px;font-size:11.5px;color:#a4a4a4;letter-spacing:-0.192px;">XMPP (Jabber)</span>
<svg class="b" style="left:385.80000000000007px;top:215.52499999999998px;" width="16.8" height="16.8" viewBox="0 0 16 16"><circle cx="8" cy="8" r="7.6" fill="#0b0b0b"/><ellipse cx="8" cy="4.5" rx="1.9" ry="2.5" fill="#35e02a" transform="rotate(0 8 8)"/><ellipse cx="8" cy="4.5" rx="1.9" ry="2.5" fill="#35e02a" transform="rotate(72 8 8)"/><ellipse cx="8" cy="4.5" rx="1.9" ry="2.5" fill="#35e02a" transform="rotate(144 8 8)"/><ellipse cx="8" cy="4.5" rx="1.9" ry="2.5" fill="#35e02a" transform="rotate(216 8 8)"/><ellipse cx="8" cy="4.5" rx="1.9" ry="2.5" fill="#35e02a" transform="rotate(288 8 8)"/><circle cx="8" cy="8" r="1.3" fill="#0b0b0b"/></svg>
<svg class="b" style="left:406.70000000000005px;top:215.72500000000002px;" width="16" height="16.8" viewBox="0 0 15.8 15.8" preserveAspectRatio="none"><rect x="0" y="0" width="15.8" height="15.8" rx="2.4" fill="#d6d6d6"/><path d="M3.4 8.2 L6.7 11.5 L12.4 4" fill="none" stroke="#fff" stroke-width="2"/></svg>
<span class="t" style="left:424.9000000000001px;top:216.50px;line-height:16px;font-size:11.0px;color:#a4a4a4;letter-spacing:-0.197px;">ICQ (OSCAR)</span>
<svg class="b" style="left:385.80000000000007px;top:239.14999999999998px;" width="16.8" height="16.8" viewBox="0 0 16 16"><g transform="translate(8 8) scale(0.94) translate(-8 -8)"><circle cx="8" cy="8" r="7.3" fill="#52b848"/><circle cx="8" cy="8" r="5.6" fill="#fff"/><circle cx="8" cy="8" r="4.4" fill="#52b848"/><circle cx="8" cy="8" r="3.1" fill="#fff"/><circle cx="8" cy="8" r="1.7" fill="#52b848"/><path d="M2 13 L0.8 15.4 L4.4 14.4 Z" fill="#52b848"/></g></svg>
<svg class="b" style="left:406.70000000000005px;top:239.35000000000002px;" width="16" height="16.8" viewBox="0 0 15.8 15.8" preserveAspectRatio="none"><rect x="0" y="0" width="15.8" height="15.8" rx="2.4" fill="#d6d6d6"/><path d="M3.4 8.2 L6.7 11.5 L12.4 4" fill="none" stroke="#fff" stroke-width="2"/></svg>
<span class="t" style="left:424.9000000000001px;top:240.50px;line-height:16px;font-size:12.0px;color:#a4a4a4;letter-spacing:-0.235px;">Агент Mail.Ru</span>
<svg class="b" style="left:385.80000000000007px;top:262.775px;" width="16.8" height="16.8" viewBox="0 0 16 16"><text x="0.5" y="14" font-family="Liberation Serif,serif" font-size="18.5" fill="#e0442a" textLength="15" lengthAdjust="spacingAndGlyphs">Y!</text></svg>
<svg class="b" style="left:406.70000000000005px;top:262.975px;" width="16" height="16.8" viewBox="0 0 15.8 15.8" preserveAspectRatio="none"><rect x="0" y="0" width="15.8" height="15.8" rx="2.4" fill="#d6d6d6"/><path d="M3.4 8.2 L6.7 11.5 L12.4 4" fill="none" stroke="#fff" stroke-width="2"/></svg>
<span class="t" style="left:424.9000000000001px;top:264.50px;line-height:16px;font-size:11.75px;color:#a4a4a4;letter-spacing:-0.251px;">Yahoo</span>
<svg class="b" style="left:535.2px;top:50.14999999999998px;" width="16.8" height="16.8" viewBox="0 0 16 16"><rect x="0.5" y="0.5" width="15" height="15" rx="5" fill="#1f6fe5"/><rect x="3.2" y="5.4" width="6.2" height="5.2" rx="1.2" fill="#fff"/><path d="M10 7.2 L12.8 5.6 V10.4 L10 8.8 Z" fill="#fff"/></svg>
<svg class="b" style="left:557.0px;top:50.35000000000002px;" width="16" height="16.8" viewBox="0 0 15.8 15.8" preserveAspectRatio="none"><rect x="0" y="0" width="15.8" height="15.8" rx="2.4" fill="#d6d6d6"/><path d="M3.4 8.2 L6.7 11.5 L12.4 4" fill="none" stroke="#fff" stroke-width="2"/></svg>
<span class="t" style="left:575.2px;top:51.50px;line-height:16px;font-size:11.75px;color:#a4a4a4;letter-spacing:-0.245px;">Zoom</span>
<svg class="b" style="left:535.2px;top:73.77499999999998px;" width="16.8" height="16.8" viewBox="0 0 16 16"><path d="M3 3 L5.6 4.4 Q8 3.8 10.4 4.2 Q15.2 5.2 15.2 8.2 Q15.2 11.2 10.4 12.2 Q8 12.6 5.6 12 L3 13.4 L3.4 10.8 Q1.2 9.6 1.2 8.2 Q1.2 6.8 3.4 5.6 Z" fill="#fff" stroke="#e8304a" stroke-width="1.4"/><circle cx="5.8" cy="8.2" r="1" fill="#e8304a"/><circle cx="8.6" cy="8.2" r="1" fill="#e8304a"/><circle cx="11.4" cy="8.2" r="1" fill="#e8304a"/></svg>
<svg class="b" style="left:557.0px;top:73.97500000000002px;" width="16" height="16.8" viewBox="0 0 15.8 15.8" preserveAspectRatio="none"><rect x="0" y="0" width="15.8" height="15.8" rx="2.4" fill="#d6d6d6"/><path d="M3.4 8.2 L6.7 11.5 L12.4 4" fill="none" stroke="#fff" stroke-width="2"/></svg>
<span class="t" style="left:575.2px;top:75.50px;line-height:16px;font-size:11.75px;color:#a4a4a4;letter-spacing:-0.288px;">RocketChat</span>
<svg class="b" style="left:535.2px;top:97.39999999999998px;" width="16.8" height="16.8" viewBox="0 0 16 16"><g transform="translate(8 8) scale(1.12) translate(-8 -8)"><path d="M11.6 2.4 A6.6 6.6 0 1 1 4.6 2.3 L4.8 4.6 A4.6 4.6 0 1 0 11.4 4.8 Z" fill="#1452b8"/><path d="M9.6 1.2 Q11.4 5.4 10.4 7.4 Q9.4 9.2 7.6 8.6 Q5.6 7.8 6.4 5.6 Q7 4 9.6 1.2 Z" fill="#1452b8"/></g></svg>
<svg class="b" style="left:557.0px;top:97.60000000000002px;" width="16" height="16.8" viewBox="0 0 15.8 15.8" preserveAspectRatio="none"><rect x="0" y="0" width="15.8" height="15.8" rx="2.4" fill="#d6d6d6"/><path d="M3.4 8.2 L6.7 11.5 L12.4 4" fill="none" stroke="#fff" stroke-width="2"/></svg>
<span class="t" style="left:575.2px;top:98.50px;line-height:16px;font-size:12.5px;color:#a4a4a4;letter-spacing:-0.191px;">Mattermost</span>
<svg class="b" style="left:535.2px;top:121.02499999999998px;" width="16.8" height="16.8" viewBox="0 0 16 16"><rect x="0.5" y="0.5" width="15" height="15" rx="3.4" fill="#26c6e8"/><path d="M3.2 8 L12.6 3.6 L9.4 12.8 L8.2 8.8 Z" fill="#fff"/></svg>
<svg class="b" style="left:557.0px;top:121.22500000000002px;" width="16" height="16.8" viewBox="0 0 15.8 15.8" preserveAspectRatio="none"><rect x="0" y="0" width="15.8" height="15.8" rx="2.4" fill="#d6d6d6"/><path d="M3.4 8.2 L6.7 11.5 L12.4 4" fill="none" stroke="#fff" stroke-width="2"/></svg>
<span class="t" style="left:575.2px;top:122.50px;line-height:16px;font-size:12.0px;color:#a4a4a4;letter-spacing:-0.211px;">Яндекс.Мессенджер</span>
<svg class="b" style="left:535.2px;top:144.64999999999998px;" width="16.8" height="16.8" viewBox="0 0 16 16"><rect x="0.5" y="0.5" width="15" height="15" rx="3.6" fill="#151515"/><circle cx="6.8" cy="8" r="3.4" fill="none" stroke="#fff" stroke-width="1.2"/><circle cx="8" cy="6.9" r="0.9" fill="#fff"/><circle cx="12.6" cy="8" r="1.3" fill="#36d23b"/></svg>
<svg class="b" style="left:557.0px;top:144.85000000000002px;" width="16" height="16.8" viewBox="0 0 15.8 15.8" preserveAspectRatio="none"><rect x="0" y="0" width="15.8" height="15.8" rx="2.4" fill="#d6d6d6"/><path d="M3.4 8.2 L6.7 11.5 L12.4 4" fill="none" stroke="#fff" stroke-width="2"/></svg>
<span class="t" style="left:575.2px;top:145.50px;line-height:16px;font-size:11.75px;color:#a4a4a4;letter-spacing:-0.208px;">Яндекс.Телемост</span>
<svg class="b" style="left:535.2px;top:168.27499999999998px;" width="16.8" height="16.8" viewBox="0 0 16 16"><rect x="0.5" y="0.5" width="15" height="15" rx="3.6" fill="#3f9af5"/><path d="M3.4 5 Q3.4 4.2 4.2 4.2 H9.6 V6.4 Q7.8 6.4 7.8 8 Q7.8 9.6 9.6 9.6 V11.8 H4.2 Q3.4 11.8 3.4 11 Z" fill="#fff"/><path d="M10.2 7 L12.8 5.2 V10.8 L10.2 9 Z" fill="#fff"/></svg>
<svg class="b" style="left:557.0px;top:168.47500000000002px;" width="16" height="16.8" viewBox="0 0 15.8 15.8" preserveAspectRatio="none"><rect x="0" y="0" width="15.8" height="15.8" rx="2.4" fill="#d6d6d6"/><path d="M3.4 8.2 L6.7 11.5 L12.4 4" fill="none" stroke="#fff" stroke-width="2"/></svg>
<span class="t" style="left:575.2px;top:169.50px;line-height:16px;font-size:12.5px;color:#a4a4a4;letter-spacing:-0.284px;">Контур.Толк</span>
<svg class="b" style="left:535.2px;top:191.89999999999998px;" width="16.8" height="16.8" viewBox="0 0 16 16"><ellipse cx="6" cy="6" rx="5.4" ry="4.6" fill="#21c65a"/><path d="M2.6 9.4 L2 12 L5 10.4 Z" fill="#21c65a"/><circle cx="4.2" cy="4.8" r="0.8" fill="#fff"/><circle cx="7.8" cy="4.8" r="0.8" fill="#fff"/><ellipse cx="11" cy="10.6" rx="4.6" ry="3.9" fill="#21c65a" stroke="#f4f4f4" stroke-width="0.8"/><path d="M13.4 13.4 L14.2 15.4 L11.6 14.2 Z" fill="#21c65a"/><circle cx="9.6" cy="9.8" r="0.7" fill="#fff"/><circle cx="12.4" cy="9.8" r="0.7" fill="#fff"/></svg>
<svg class="b" style="left:557.0px;top:192.10000000000002px;" width="16" height="16.8" viewBox="0 0 15.8 15.8" preserveAspectRatio="none"><rect x="0" y="0" width="15.8" height="15.8" rx="2.4" fill="#d6d6d6"/><path d="M3.4 8.2 L6.7 11.5 L12.4 4" fill="none" stroke="#fff" stroke-width="2"/></svg>
<span class="t" style="left:575.2px;top:193.50px;line-height:16px;font-size:11.75px;color:#a4a4a4;letter-spacing:-0.288px;">WeChat</span>
<svg class="b" style="left:535.2px;top:215.52499999999998px;" width="16.8" height="16.8" viewBox="0 0 16 16"><circle cx="8" cy="8" r="5.3" fill="#3f6df2"/><circle cx="8" cy="8" r="6.9" fill="none" stroke="#3f6df2" stroke-width="1.2" stroke-dasharray="2 0.9"/></svg>
<svg class="b" style="left:557.0px;top:215.72500000000002px;" width="16" height="16.8" viewBox="0 0 15.8 15.8" preserveAspectRatio="none"><rect x="0" y="0" width="15.8" height="15.8" rx="2.4" fill="#d6d6d6"/><path d="M3.4 8.2 L6.7 11.5 L12.4 4" fill="none" stroke="#fff" stroke-width="2"/></svg>
<span class="t" style="left:575.2px;top:216.50px;line-height:16px;font-size:11.5px;color:#a4a4a4;letter-spacing:-0.234px;">Signal</span>
<svg class="b" style="left:535.2px;top:239.14999999999998px;" width="16.8" height="16.8" viewBox="0 0 16 16"><rect x="0.5" y="0.5" width="15" height="15" rx="2.6" fill="#050505"/><path d="M3 4 L7.6 12.4 M7.6 3.6 L3 12.4" stroke="#fff" stroke-width="1.2"/><path d="M8.6 8 H13.6" stroke="#fff" stroke-width="1" stroke-dasharray="1.1 0.7"/></svg>
<svg class="b" style="left:557.0px;top:239.35000000000002px;" width="16" height="16.8" viewBox="0 0 15.8 15.8" preserveAspectRatio="none"><rect x="0" y="0" width="15.8" height="15.8" rx="2.4" fill="#d6d6d6"/><path d="M3.4 8.2 L6.7 11.5 L12.4 4" fill="none" stroke="#fff" stroke-width="2"/></svg>
<span class="t" style="left:575.2px;top:240.50px;line-height:16px;font-size:11.25px;color:#a4a4a4;letter-spacing:-0.246px;">eXpress</span>
<svg class="b" style="left:535.2px;top:262.775px;" width="16.8" height="16.8" viewBox="0 0 16 16"><rect x="0.5" y="0.5" width="15" height="15" rx="3.4" fill="#1c7cf4"/><circle cx="5.4" cy="5" r="1.9" fill="#fff"/><circle cx="10.6" cy="5" r="1.9" fill="#fff"/><path d="M2.6 13 Q2.6 8 5.4 8 Q8 8 8 13 Q8 8 10.6 8 Q13.4 8 13.4 13 Z" fill="#fff"/></svg>
<svg class="b" style="left:557.0px;top:262.975px;" width="16" height="16.8" viewBox="0 0 15.8 15.8" preserveAspectRatio="none"><rect x="0" y="0" width="15.8" height="15.8" rx="2.4" fill="#d6d6d6"/><path d="M3.4 8.2 L6.7 11.5 L12.4 4" fill="none" stroke="#fff" stroke-width="2"/></svg>
<span class="t" style="left:575.2px;top:264.50px;line-height:16px;font-size:11.25px;color:#a4a4a4;letter-spacing:-0.182px;">VK Teams</span>
<svg class="b" style="left:716.8px;top:26.299999999999955px;" width="16.6" height="16.6" viewBox="0 0 16 16"><circle cx="8" cy="8" r="7.2" fill="#d6e8fb" stroke="#2f6fc0" stroke-width="1.1"/><ellipse cx="8" cy="8" rx="3.2" ry="7.2" fill="none" stroke="#2f6fc0" stroke-width="0.9"/><path d="M8 0.8 V15.2 M0.8 8 H15.2 M2 4.4 H14 M2 11.6 H14" stroke="#2f6fc0" stroke-width="0.9"/></svg>
<svg class="b" style="left:735.7px;top:26.399999999999977px;" width="16" height="16.8" viewBox="0 0 15.8 15.8" preserveAspectRatio="none"><rect x="0.75" y="0.75" width="14.3" height="14.3" rx="2" fill="#fff" stroke="#d0d0d0" stroke-width="1.5"/><rect x="3.1" y="3.1" width="9.6" height="9.6" fill="#cfcfcf"/></svg>
<span class="t" style="left:753.9000000000001px;top:27.30px;line-height:16px;font-size:11.75px;color:#a4a4a4;letter-spacing:-0.178px;">Web</span>
<svg class="b" style="left:734.3px;top:50.14999999999998px;" width="16.8" height="16.8" viewBox="0 0 16 16"><path d="M0.6 8 L7.4 0.9 V4.4 H10.2 V11.6 H7.4 V15.1 Z" fill="#fdc066" stroke="#f29a22" stroke-width="0.9" stroke-linejoin="round"/><rect x="11.2" y="4.4" width="1.9" height="3" fill="#f08c14"/><rect x="13.8" y="4.4" width="1.9" height="3" fill="#f08c14"/><rect x="11.2" y="8.6" width="1.9" height="3" fill="#f08c14"/><rect x="13.8" y="8.6" width="1.9" height="3" fill="#f08c14"/></svg>
<svg class="b" style="left:755.9000000000001px;top:50.35000000000002px;" width="16" height="16.8" viewBox="0 0 15.8 15.8" preserveAspectRatio="none"><rect x="0" y="0" width="15.8" height="15.8" rx="2.4" fill="#d6d6d6"/><path d="M3.4 8.2 L6.7 11.5 L12.4 4" fill="none" stroke="#fff" stroke-width="2"/></svg>
<span class="t" style="left:774.1000000000001px;top:51.50px;line-height:16px;font-size:12.25px;color:#a4a4a4;letter-spacing:-0.245px;">Посещенные веб-страницы</span>
<svg class="b" style="left:734.3px;top:73.77499999999998px;" width="16.8" height="16.8" viewBox="0 0 16 16"><circle cx="6.6" cy="6.6" r="5.4" fill="#f1f7fd" stroke="#3f7fc8" stroke-width="1.3"/><rect x="3.6" y="4.6" width="11" height="4" rx="0.8" fill="#fde3b0" stroke="#f0a030" stroke-width="1"/><path d="M10.6 10.8 L15 15.2" stroke="#3f7fc8" stroke-width="2" stroke-linecap="round"/></svg>
<svg class="b" style="left:755.9000000000001px;top:73.97500000000002px;" width="16" height="16.8" viewBox="0 0 15.8 15.8" preserveAspectRatio="none"><rect x="0.75" y="0.75" width="14.3" height="14.3" rx="2" fill="#fff" stroke="#d6d6d6" stroke-width="1.5"/></svg>
<span class="t" style="left:774.1000000000001px;top:75.50px;line-height:16px;font-size:12.25px;color:#a4a4a4;letter-spacing:-0.197px;">Поисковые запросы</span>
<svg class="b" style="left:734.3px;top:97.39999999999998px;" width="16.8" height="16.8" viewBox="0 0 16 16"><path d="M15.4 8 L8.6 0.9 V4.4 H5.8 V11.6 H8.6 V15.1 Z" fill="#77cc18" stroke="#58a80c" stroke-width="0.9" stroke-linejoin="round"/><rect x="0.3" y="4.4" width="1.9" height="3" fill="#58a80c"/><rect x="2.9" y="4.4" width="1.9" height="3" fill="#58a80c"/><rect x="0.3" y="8.6" width="1.9" height="3" fill="#58a80c"/><rect x="2.9" y="8.6" width="1.9" height="3" fill="#58a80c"/></svg>
<svg class="b" style="left:755.9000000000001px;top:97.60000000000002px;" width="16" height="16.8" viewBox="0 0 15.8 15.8" preserveAspectRatio="none"><rect x="0" y="0" width="15.8" height="15.8" rx="2.4" fill="#d6d6d6"/><path d="M3.4 8.2 L6.7 11.5 L12.4 4" fill="none" stroke="#fff" stroke-width="2"/></svg>
<span class="t" style="left:774.1000000000001px;top:98.50px;line-height:16px;font-size:12.25px;color:#a4a4a4;letter-spacing:-0.282px;">Отправленные запросы</span>
<svg class="b" style="left:734.3px;top:121.02499999999998px;" width="16.8" height="16.8" viewBox="0 0 16 16"><ellipse cx="8.6" cy="7" rx="6.4" ry="5.6" fill="#35a7f0"/><path d="M4.4 10.6 L2.6 14.6 L7.6 12.2 Z" fill="#35a7f0"/><ellipse cx="8.6" cy="5.4" rx="4.8" ry="2.6" fill="#8fd2fb" opacity="0.7"/><path d="M5.4 5.8 h6.4 M5.4 7.8 h6.4 M5.4 9.6 h4" stroke="#e8f5ff" stroke-width="0.9"/></svg>
<svg class="b" style="left:755.9000000000001px;top:121.22500000000002px;" width="16" height="16.8" viewBox="0 0 15.8 15.8" preserveAspectRatio="none"><rect x="0" y="0" width="15.8" height="15.8" rx="2.4" fill="#d6d6d6"/><path d="M3.4 8.2 L6.7 11.5 L12.4 4" fill="none" stroke="#fff" stroke-width="2"/></svg>
<span class="t" style="left:774.1000000000001px;top:122.50px;line-height:16px;font-size:12.5px;color:#a4a4a4;letter-spacing:-0.206px;">Web-коммуникации</span>
<svg class="b" style="left:734.3px;top:144.64999999999998px;" width="16.8" height="16.8" viewBox="0 0 16 16"><rect x="1.4" y="1.2" width="13.2" height="14" fill="#f4f9fe" stroke="#4f86c6" stroke-width="0.9"/><rect x="1.9" y="1.7" width="12.2" height="2" fill="#cfe2f6"/><circle cx="8" cy="9.6" r="4.2" fill="#2f86e0"/><path d="M4.6 8 Q6.4 5.6 8.6 6.6 Q9.8 8.6 8.4 10.2 Q7.4 12.8 5.6 11.8 Q4.4 9.8 4.6 8 Z" fill="#5cc043"/><path d="M10 6.4 L12 8.2 L11 11 L9.8 9 Z" fill="#5cc043"/></svg>
<svg class="b" style="left:755.9000000000001px;top:144.85000000000002px;" width="16" height="16.8" viewBox="0 0 15.8 15.8" preserveAspectRatio="none"><rect x="0.75" y="0.75" width="14.3" height="14.3" rx="2" fill="#fff" stroke="#d6d6d6" stroke-width="1.5"/></svg>
<span class="t" style="left:774.1000000000001px;top:145.50px;line-height:16px;font-size:12.25px;color:#a4a4a4;letter-spacing:-0.289px;">Браузер-активность</span>
<svg class="b" style="left:734.3px;top:168.27499999999998px;" width="16.8" height="16.8" viewBox="0 0 16 16"><path d="M5.5 2.5 H12 L15 5.5 V15.5 H5.5 Z" fill="#eaf2fb" stroke="#6f9fd4" stroke-width="0.9"/><path d="M3.6 0.6 H10.4 L13.4 3.6 V13.6 H3.6 Z" fill="#f8fbfe" stroke="#6f9fd4" stroke-width="0.9"/><rect x="0.2" y="4.4" width="12.2" height="6.6" fill="#f07a18"/><text x="0.9" y="9.9" font-family="Liberation Sans,sans-serif" font-size="6.3" font-weight="bold" fill="#fff" textLength="10.8" lengthAdjust="spacingAndGlyphs">FILE</text></svg>
<svg class="b" style="left:755.9000000000001px;top:168.47500000000002px;" width="16" height="16.8" viewBox="0 0 15.8 15.8" preserveAspectRatio="none"><rect x="0" y="0" width="15.8" height="15.8" rx="2.4" fill="#d6d6d6"/><path d="M3.4 8.2 L6.7 11.5 L12.4 4" fill="none" stroke="#fff" stroke-width="2"/></svg>
<span class="t" style="left:774.1000000000001px;top:169.50px;line-height:16px;font-size:11.75px;color:#a4a4a4;letter-spacing:-0.359px;">Файлы</span>
<svg class="b" style="left:950.2px;top:26.299999999999955px;" width="16.6" height="16.6" viewBox="0 0 16 16"><rect x="6.6" y="0.6" width="8.8" height="9" rx="0.8" fill="#eaf2fb" stroke="#3f6fb0" stroke-width="0.9"/><path d="M8.6 3 h5 M8.6 5 h5" stroke="#3f6fb0" stroke-width="0.8"/><rect x="0.6" y="6.4" width="8.6" height="6.4" fill="#f8c64a" stroke="#c8902a" stroke-width="0.9"/><rect x="2" y="7.8" width="5.8" height="3.6" fill="#fde9a8"/><path d="M4.9 12.8 V14.6 M2.6 15 H7.2" stroke="#3f6fb0" stroke-width="1"/><path d="M10 10.4 h3.6 v3.4 h-3.6 z" fill="#d6e6f8" stroke="#3f6fb0" stroke-width="0.8"/></svg>
<svg class="b" style="left:969.1000000000001px;top:26.399999999999977px;" width="16" height="16.8" viewBox="0 0 15.8 15.8" preserveAspectRatio="none"><rect x="0.75" y="0.75" width="14.3" height="14.3" rx="2" fill="#fff" stroke="#d0d0d0" stroke-width="1.5"/><rect x="3.1" y="3.1" width="9.6" height="9.6" fill="#cfcfcf"/></svg>
<span class="t" style="left:987.3000000000002px;top:27.30px;line-height:16px;font-size:12.25px;color:#a4a4a4;letter-spacing:-0.194px;">Прочее</span>
<svg class="b" style="left:967.8px;top:50.14999999999998px;" width="16.8" height="16.8" viewBox="0 0 16 16"><path d="M0.6 1.6 H6 L7 3 H15.4 V10.8 H0.6 Z" fill="#f3a51e"/><rect x="1.2" y="3.8" width="13.6" height="6.4" fill="#fbd36a"/><text x="8" y="9.2" text-anchor="middle" font-family="Liberation Sans,sans-serif" font-size="5.8" font-weight="bold" fill="#5a3a08">FTP</text><path d="M8 10.8 V13.4 M1.4 14 H14.6" stroke="#9ab0cc" stroke-width="1"/><circle cx="8" cy="14" r="1.5" fill="#f3a51e"/></svg>
<svg class="b" style="left:989.4000000000001px;top:50.35000000000002px;" width="16" height="16.8" viewBox="0 0 15.8 15.8" preserveAspectRatio="none"><rect x="0" y="0" width="15.8" height="15.8" rx="2.4" fill="#d6d6d6"/><path d="M3.4 8.2 L6.7 11.5 L12.4 4" fill="none" stroke="#fff" stroke-width="2"/></svg>
<span class="t" style="left:1007.6000000000001px;top:51.50px;line-height:16px;font-size:11.75px;color:#a4a4a4;letter-spacing:-1.300px;">FTP</span>
<svg class="b" style="left:967.8px;top:73.77499999999998px;" width="16.8" height="16.8" viewBox="0 0 16 16"><rect x="4.2" y="4.2" width="11.4" height="7.6" rx="1.8" fill="#5fa5ea" stroke="#2f78c8" stroke-width="0.9"/><rect x="0.6" y="5.6" width="3.8" height="4.8" fill="#dbe8f6" stroke="#6f93bf" stroke-width="0.8"/><rect x="1.6" y="6.7" width="1.2" height="1" fill="#6f93bf"/><rect x="1.6" y="8.5" width="1.2" height="1" fill="#6f93bf"/><rect x="6" y="5.6" width="8" height="1.6" rx="0.8" fill="#a9d0f6"/></svg>
<svg class="b" style="left:989.4000000000001px;top:73.97500000000002px;" width="16" height="16.8" viewBox="0 0 15.8 15.8" preserveAspectRatio="none"><rect x="0" y="0" width="15.8" height="15.8" rx="2.4" fill="#d6d6d6"/><path d="M3.4 8.2 L6.7 11.5 L12.4 4" fill="none" stroke="#fff" stroke-width="2"/></svg>
<span class="t" style="left:1007.6000000000001px;top:75.50px;line-height:16px;font-size:11.75px;color:#a4a4a4;letter-spacing:-0.217px;">Файлы с устройств</span>
<svg class="b" style="left:967.8px;top:97.39999999999998px;" width="16.8" height="16.8" viewBox="0 0 16 16"><rect x="3.6" y="0.6" width="9.4" height="12" fill="#f4f8fc" stroke="#6f93bf" stroke-width="0.9"/><path d="M5.4 2.8 h5.8 M5.4 4.8 h5.8 M5.4 6.8 h5.8 M5.4 8.8 h5.8" stroke="#6f93bf" stroke-width="0.9"/><path d="M0.4 13 H6" stroke="#222" stroke-width="1.3"/><rect x="6" y="11" width="4.4" height="4" fill="#333"/><rect x="10.4" y="11.8" width="3.4" height="2.4" fill="#e8a81e"/><path d="M10.4 10.4 H15.4 V15.6 H10.4" fill="none" stroke="#6f93bf" stroke-width="0.7"/></svg>
<svg class="b" style="left:989.4000000000001px;top:97.60000000000002px;" width="16" height="16.8" viewBox="0 0 15.8 15.8" preserveAspectRatio="none"><rect x="0.75" y="0.75" width="14.3" height="14.3" rx="2" fill="#fff" stroke="#d6d6d6" stroke-width="1.5"/></svg>
<span class="t" style="left:1007.6000000000001px;top:98.50px;line-height:16px;font-size:12.0px;color:#a4a4a4;letter-spacing:-0.278px;">Аудит устройств</span>
<svg class="b" style="left:967.8px;top:121.02499999999998px;" width="16.8" height="16.8" viewBox="0 0 16 16"><path d="M1 1.4 H6 L7 2.8 H14 V10.4 H1 Z" fill="#f3b03a"/><path d="M2.8 4.6 H15.4 L13.6 10.4 H1 Z" fill="#fbd983"/><path d="M8 10.6 V13.2 M1.4 14 H14.6" stroke="#9ab0cc" stroke-width="1"/><circle cx="8" cy="14" r="1.5" fill="#f3a51e"/></svg>
<svg class="b" style="left:989.4000000000001px;top:121.22500000000002px;" width="16" height="16.8" viewBox="0 0 15.8 15.8" preserveAspectRatio="none"><rect x="0" y="0" width="15.8" height="15.8" rx="2.4" fill="#d6d6d6"/><path d="M3.4 8.2 L6.7 11.5 L12.4 4" fill="none" stroke="#fff" stroke-width="2"/></svg>
<span class="t" style="left:1007.6000000000001px;top:122.50px;line-height:16px;font-size:11.75px;color:#a4a4a4;letter-spacing:-0.254px;">Сетевые ресурсы</span>
<svg class="b" style="left:967.8px;top:144.64999999999998px;" width="16.8" height="16.8" viewBox="0 0 16 16"><defs><linearGradient id="cg" x1="0" y1="0" x2="0" y2="1"><stop offset="0" stop-color="#ffffff"/><stop offset="1" stop-color="#9fd0fa"/></linearGradient></defs><path d="M4.2 10.6 Q0.8 10.6 0.8 7.8 Q0.8 5.2 3.6 5 Q4.2 1.6 7.8 1.6 Q11 1.6 11.8 4.6 Q15.2 4.6 15.2 7.6 Q15.2 10.6 12 10.6 Z" fill="url(#cg)" stroke="#4a96e4" stroke-width="1"/><path d="M8 10.8 V13.2 M1.4 14 H14.6" stroke="#9ab0cc" stroke-width="1"/><circle cx="8" cy="14" r="1.5" fill="#f3a51e"/></svg>
<svg class="b" style="left:989.4000000000001px;top:144.85000000000002px;" width="16" height="16.8" viewBox="0 0 15.8 15.8" preserveAspectRatio="none"><rect x="0" y="0" width="15.8" height="15.8" rx="2.4" fill="#d6d6d6"/><path d="M3.4 8.2 L6.7 11.5 L12.4 4" fill="none" stroke="#fff" stroke-width="2"/></svg>
<span class="t" style="left:1007.6000000000001px;top:145.50px;line-height:16px;font-size:12.25px;color:#a4a4a4;letter-spacing:-0.306px;">Облачные хранилища</span>
<svg class="b" style="left:967.8px;top:168.27499999999998px;" width="16.8" height="16.8" viewBox="0 0 16 16"><rect x="0.6" y="0.6" width="14.8" height="11" fill="#4a4a55" stroke="#7a8ca8" stroke-width="0.8"/><rect x="1.6" y="1.6" width="12.8" height="3" fill="#e85048"/><circle cx="8" cy="4.6" r="2.2" fill="#fff" stroke="#333" stroke-width="0.9"/><rect x="2.4" y="6.4" width="4" height="3.4" fill="#d8d8e0"/><rect x="9.6" y="6.4" width="4" height="3.4" fill="#d8d8e0"/><rect x="6.4" y="11.8" width="3.2" height="2" fill="#6f93bf"/><rect x="4" y="13.8" width="8" height="1.4" fill="#4f86c6"/></svg>
<svg class="b" style="left:989.4000000000001px;top:168.47500000000002px;" width="16" height="16.8" viewBox="0 0 15.8 15.8" preserveAspectRatio="none"><rect x="0.75" y="0.75" width="14.3" height="14.3" rx="2" fill="#fff" stroke="#d6d6d6" stroke-width="1.5"/></svg>
<span class="t" style="left:1007.6000000000001px;top:169.50px;line-height:16px;font-size:12.0px;color:#a4a4a4;letter-spacing:-0.180px;">Снимки экрана</span>
<svg class="b" style="left:967.8px;top:191.89999999999998px;" width="16.8" height="16.8" viewBox="0 0 16 16"><circle cx="8" cy="6.4" r="5.6" fill="#b7d3f0" stroke="#5f8fc8" stroke-width="1"/><circle cx="8" cy="6.4" r="3.2" fill="#3f6fb0"/><circle cx="8" cy="6.4" r="1.4" fill="#14284a"/><circle cx="6.9" cy="5.3" r="0.8" fill="#d6e8fb"/><path d="M4.2 14.8 Q8 10.6 11.8 14.8 Z" fill="#8fb4de" stroke="#5f8fc8" stroke-width="0.8"/></svg>
<svg class="b" style="left:989.4000000000001px;top:192.10000000000002px;" width="16" height="16.8" viewBox="0 0 15.8 15.8" preserveAspectRatio="none"><rect x="0.75" y="0.75" width="14.3" height="14.3" rx="2" fill="#fff" stroke="#d6d6d6" stroke-width="1.5"/></svg>
<span class="t" style="left:1007.6000000000001px;top:193.50px;line-height:16px;font-size:12.25px;color:#a4a4a4;letter-spacing:-0.189px;">Снимки веб-камеры</span>
<svg class="b" style="left:967.8px;top:215.52499999999998px;" width="16.8" height="16.8" viewBox="0 0 16 16"><rect x="0.6" y="0.8" width="14.8" height="11" fill="#dcebf9" stroke="#4f86c6" stroke-width="1"/><rect x="1.8" y="2" width="12.4" height="8.6" fill="#a9d0f6"/><circle cx="8" cy="6.2" r="3.4" fill="#fdf0d0" stroke="#e89a1e" stroke-width="1"/><path d="M8 4.2 V6.4 H9.8" stroke="#c8780a" stroke-width="0.9" fill="none"/><rect x="6.4" y="11.8" width="3.2" height="2" fill="#6f93bf"/><rect x="4" y="13.8" width="8" height="1.4" fill="#4f86c6"/></svg>
<svg class="b" style="left:989.4000000000001px;top:215.72500000000002px;" width="16" height="16.8" viewBox="0 0 15.8 15.8" preserveAspectRatio="none"><rect x="0.75" y="0.75" width="14.3" height="14.3" rx="2" fill="#fff" stroke="#d6d6d6" stroke-width="1.5"/></svg>
<span class="t" style="left:1007.6000000000001px;top:216.50px;line-height:16px;font-size:12.0px;color:#a4a4a4;letter-spacing:-0.215px;">Активность ПК</span>
<svg class="b" style="left:967.8px;top:239.14999999999998px;" width="16.8" height="16.8" viewBox="0 0 16 16"><rect x="4" y="0.8" width="8" height="5" fill="#fff" stroke="#4f86c6" stroke-width="0.9"/><rect x="0.8" y="5.6" width="14.4" height="6.6" rx="1" fill="#5f9be0" stroke="#2f6fb8" stroke-width="0.9"/><rect x="3.6" y="9.6" width="8.8" height="5.4" fill="#fff" stroke="#4f86c6" stroke-width="0.9"/><path d="M5 11.6 h6 M5 13.2 h6" stroke="#9ab8dc" stroke-width="0.8"/></svg>
<svg class="b" style="left:989.4000000000001px;top:239.35000000000002px;" width="16" height="16.8" viewBox="0 0 15.8 15.8" preserveAspectRatio="none"><rect x="0" y="0" width="15.8" height="15.8" rx="2.4" fill="#d6d6d6"/><path d="M3.4 8.2 L6.7 11.5 L12.4 4" fill="none" stroke="#fff" stroke-width="2"/></svg>
<span class="t" style="left:1007.6000000000001px;top:240.50px;line-height:16px;font-size:12.0px;color:#a4a4a4;letter-spacing:-0.224px;">Принтеры</span>
<svg class="b" style="left:967.8px;top:262.775px;" width="16.8" height="16.8" viewBox="0 0 16 16"><rect x="2" y="2.4" width="12" height="13" rx="1" fill="#e8a81e" stroke="#b87808" stroke-width="0.9"/><rect x="4" y="4.6" width="8" height="9.4" fill="#fff"/><rect x="5.4" y="0.6" width="5.2" height="3.4" rx="0.8" fill="#3a4a66"/><path d="M5.4 7 h5.2 M5.4 9 h5.2 M5.4 11 h5.2" stroke="#6f93bf" stroke-width="0.9"/></svg>
<svg class="b" style="left:989.4000000000001px;top:262.975px;" width="16" height="16.8" viewBox="0 0 15.8 15.8" preserveAspectRatio="none"><rect x="0" y="0" width="15.8" height="15.8" rx="2.4" fill="#d6d6d6"/><path d="M3.4 8.2 L6.7 11.5 L12.4 4" fill="none" stroke="#fff" stroke-width="2"/></svg>
<span class="t" style="left:1007.6000000000001px;top:264.50px;line-height:16px;font-size:12.0px;color:#a4a4a4;letter-spacing:-0.285px;">Буфер обмена</span>
</div>
<svg class="b" style="left:297px;top:861.5px;" width="32" height="17" viewBox="0 0 32 17"><rect x="0" y="0" width="32" height="17" rx="8.5" fill="#8db84a"/><circle cx="23.5" cy="8.5" r="6.7" fill="#fff"/><path d="M20.3 8.7 L22.7 11.1 L26.8 5.8" fill="none" stroke="#8db84a" stroke-width="1.2"/></svg>
<span class="t" style="left:339px;top:863.00px;line-height:16px;font-size:12.5px;color:#111;letter-spacing:-0.241px;">Применить данное правило ко всем проиндексированным данным (операция может занять много времени)</span>
<svg class="b" style="left:296px;top:891.5px;" width="14" height="14" viewBox="0 0 14 14"><circle cx="7" cy="7" r="7" fill="#2f86e0"/><circle cx="7" cy="6" r="5" fill="#4a9cf0" opacity="0.6"/><rect x="6" y="5.8" width="2" height="5.2" fill="#fff"/><circle cx="7" cy="3.7" r="1.2" fill="#fff"/></svg>
<span class="t" style="left:321px;top:891.00px;line-height:16px;font-size:12.0px;color:#111;font-weight:bold;letter-spacing:-0.302px;">Редактирование предустановленных правил и групп невозможно</span>
<div class="b " style="left:249px;top:937.2px;width:1426px;height:1.5px;background:#dedede;"></div>
<svg class="b" style="left:275.3px;top:954.8px;" width="32" height="17" viewBox="0 0 32 17"><rect x="0" y="0" width="32" height="17" rx="8.5" fill="#8db84a"/><circle cx="23.5" cy="8.5" r="6.7" fill="#fff"/><path d="M20.3 8.7 L22.7 11.1 L26.8 5.8" fill="none" stroke="#8db84a" stroke-width="1.2"/></svg>
<span class="t" style="left:317px;top:956.50px;line-height:16px;font-size:12.5px;color:#111;letter-spacing:-0.316px;">Включить правило</span>
<div class="b " style="left:1439px;top:947px;width:99.5px;height:32px;background:#f4f4f4;border:1px solid #e4e4e4;border-radius:3px;"></div>
<div class="b " style="left:1547px;top:947px;width:99.5px;height:32px;background:#f4f4f4;border:1px solid #e4e4e4;border-radius:3px;"></div>
<span class="t" style="left:1460px;top:956.50px;line-height:16px;font-size:12.0px;color:#111;letter-spacing:-0.205px;">Сохранить</span>
<span class="t" style="left:1576px;top:956.50px;line-height:16px;font-size:12.0px;color:#111;letter-spacing:-0.313px;">Отмена</span>
</body></html>
